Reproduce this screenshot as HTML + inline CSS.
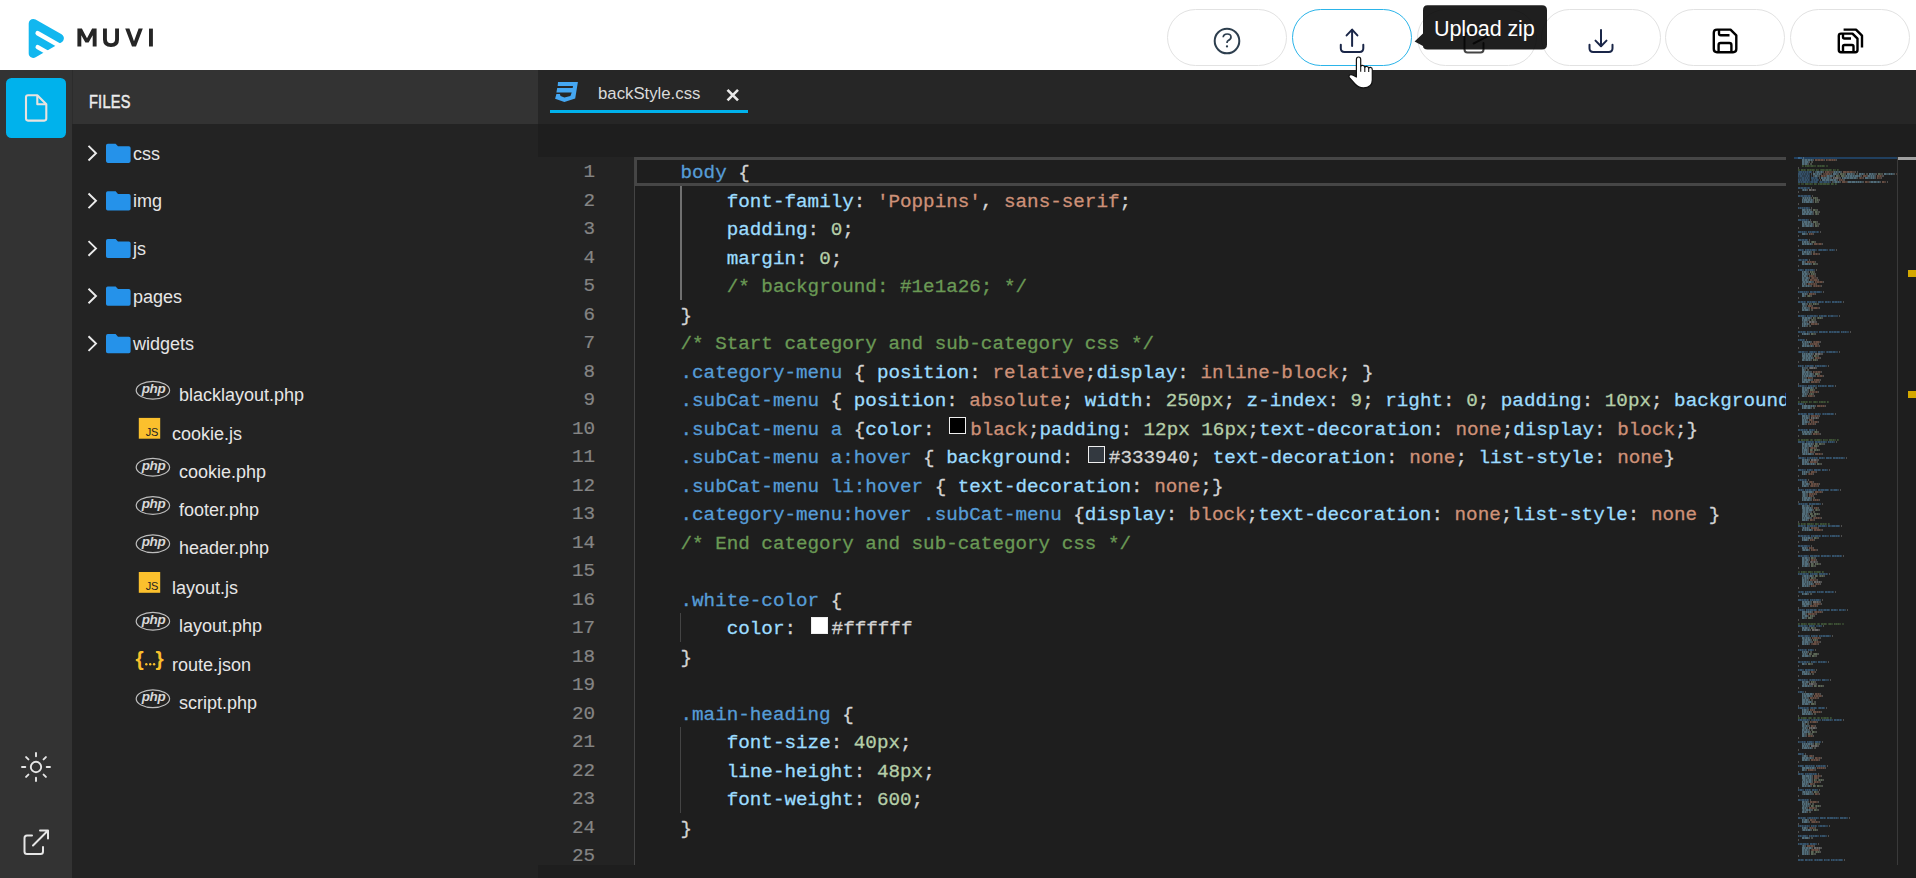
<!DOCTYPE html>
<html><head><meta charset="utf-8">
<style>
*{margin:0;padding:0;box-sizing:border-box}
html,body{width:1916px;height:878px;overflow:hidden;background:#1e1e1e;font-family:"Liberation Sans",sans-serif}
.abs{position:absolute}
#hdr{position:absolute;left:0;top:0;width:1916px;height:70px;background:#fff}
.btn{position:absolute;top:9px;width:120px;height:57px;border:1px solid #e2e2e2;border-radius:28.5px;background:#fff}
.btn.act{border:1.5px solid #2bb4e9}
#side{position:absolute;left:0;top:70px;width:72px;height:808px;background:#333333}
#files{position:absolute;left:72px;top:70px;width:466px;height:808px;background:#232323}
#fhdr{position:absolute;left:0;top:0;width:466px;height:54px;background:#333333;border-left:1px solid #2c2c2c}
.ftxt{position:absolute;color:#e6e6e6;font-size:18px;white-space:nowrap;line-height:22px}
#tabbar{position:absolute;left:538px;top:70px;width:1378px;height:54px;background:#262626}
#gap{position:absolute;left:538px;top:124px;width:1378px;height:33px;background:#1e1e1e}
#gutter{position:absolute;left:538px;top:157px;width:96px;height:708px;background:#232323}
#code{position:absolute;left:634px;top:157px;width:1152px;height:708px;background:#1e1e1e;overflow:hidden}
.ln{position:absolute;left:0;padding-top:1px;-webkit-text-stroke:0.2px currentColor;width:57px;text-align:right;color:#858585;font-family:"Liberation Mono",monospace;font-size:19.25px;line-height:28.5px;height:28.5px}
.cl{position:absolute;left:46.5px;padding-top:2px;-webkit-text-stroke:0.3px currentColor;white-space:pre;font-family:"Liberation Mono",monospace;font-size:19.25px;line-height:28.5px;height:28.5px;color:#d4d4d4}
.t{color:#569cd6}.p{color:#9cdcfe}.v{color:#ce9178}.n{color:#b5cea8}.c{color:#6a9955}.d{color:#d4d4d4}
.sw{display:inline-block;width:17px;height:17px;border:1.5px solid #fff;margin:0 4px 0 3px;vertical-align:0.5px;border-color:#eee}
.ig{position:absolute;width:1.5px;background:#707070}
</style></head><body>

<div id="hdr">
<svg class="abs" style="left:0;top:0" width="170" height="70" viewBox="0 0 170 70">
<path d="M33.3 23.6 L59.3 38.2 L33.3 53.4 Z" fill="#12b7ef" stroke="#12b7ef" stroke-width="9.2" stroke-linejoin="round"/>
<line x1="37.7" y1="33.2" x2="68" y2="50.5" stroke="#fff" stroke-width="4.6" stroke-linecap="round"/>
<line x1="37.7" y1="47.1" x2="58" y2="58.6" stroke="#fff" stroke-width="4.4" stroke-linecap="round"/>
</svg>
<svg class="abs" style="left:0;top:0" width="170" height="70" viewBox="0 0 170 70"><g fill="#262626">
<path d="M77.4 46.5 V28.6 H81.9 L87 38.3 L92.1 28.6 H96.6 V46.5 H92.7 V35.2 L88.6 42.6 H85.4 L81.3 35.2 V46.5 Z"/>
<path d="M103 28.6 H106.9 V39.3 Q106.9 43.2 111 43.2 Q115.1 43.2 115.1 39.3 V28.6 H119 V39.5 Q119 46.9 111 46.9 Q103 46.9 103 39.5 Z"/>
<path d="M125.2 28.6 H129.4 L134 41.3 L138.6 28.6 H142.8 L136 46.5 H132 Z"/>
<rect x="149" y="28.6" width="3.9" height="17.9"/>
</g></svg>
<div class="btn" style="left:1167px"></div>
<div class="btn act" style="left:1292px"></div>
<div class="btn" style="left:1417px"></div>
<div class="btn" style="left:1541px"></div>
<div class="btn" style="left:1665px"></div>
<div class="btn" style="left:1790px"></div>
</div>
<svg class="abs" style="left:0;top:0" width="1916" height="100" viewBox="0 0 1916 100">
<g fill="none" stroke="#2d3e4e">
<circle cx="1227" cy="41" r="12.3" stroke-width="2"/>
<path d="M1223.2 37.3 Q1223.4 34 1227.2 34 Q1231 34 1231 37 Q1231 39.4 1228.2 40.6 Q1227 41.2 1227 43" stroke-width="1.7"/>
</g>
<circle cx="1227" cy="46.4" r="1.15" fill="#2d3e4e"/>
<g fill="none" stroke="#1a2648" stroke-width="2" stroke-linecap="round" stroke-linejoin="round">
<path d="M1352.1 30 V46"/><path d="M1346.6 35.4 L1352.1 29.6 L1357.4 35.4"/>
<path d="M1340.8 44.8 V48.3 Q1340.8 52 1344.5 52 H1359.6 Q1363.3 52 1363.3 48.3 V44.8"/>
</g>
<g fill="none" stroke="#1a2648" stroke-width="2" stroke-linecap="round" stroke-linejoin="round">
<path d="M1601 30 V46"/><path d="M1595.5 40.6 L1601 46.2 L1606.5 40.6"/>
<path d="M1589.5 44.8 V48.3 Q1589.5 52 1593.2 52 H1608.8 Q1612.5 52 1612.5 48.3 V44.8"/>
</g>
<g fill="none" stroke="#444" stroke-width="2" stroke-linecap="round">
<path d="M1474 33 H1467.5 Q1464.5 33 1464.5 36 V49.5 Q1464.5 52.5 1467.5 52.5 H1480.5 Q1483.5 52.5 1483.5 49.5 V43"/>
<path d="M1473.6 43.5 L1487 36.7"/>
</g>
<g fill="none" stroke="#000" stroke-width="2.4" stroke-linejoin="round">
<path d="M1717 29.6 H1730.5 L1736.3 35.4 V49 Q1736.3 52.2 1733.1 52.2 H1717 Q1713.8 52.2 1713.8 49 V32.8 Q1713.8 29.6 1717 29.6 Z"/>
<path d="M1719 30 V33.5 Q1719 35.3 1720.8 35.3 H1729.5"/>
<path d="M1718.6 52 V45 Q1718.6 43 1720.6 43 H1729.4 Q1731.4 43 1731.4 45 V52"/>
</g>
<g fill="none" stroke="#000" stroke-width="2.4" stroke-linejoin="round">
<path d="M1841 33.6 H1852.5 L1857.5 38.6 V50 Q1857.5 52.2 1855.3 52.2 H1841 Q1838.8 52.2 1838.8 50 V35.8 Q1838.8 33.6 1841 33.6 Z"/>
<path d="M1843 34 V37 Q1843 38.5 1844.5 38.5 H1851"/>
<path d="M1843 52 V46.5 Q1843 45 1844.5 45 H1852 Q1853.5 45 1853.5 46.5 V52"/>
<path d="M1843.6 29.6 H1856 L1862 35.6 V47.5"/>
</g>
</svg>
<svg class="abs" style="left:1410px;top:0" width="140" height="56" viewBox="1410 0 140 56">
<path d="M1427.5 5.2 H1542 Q1547 5.2 1547 10.2 V44.4 Q1547 49.4 1542 49.4 H1427.5 Q1423 49.4 1423 46 L1414.6 41.5 L1423 33.5 V10.2 Q1423 5.2 1427.5 5.2 Z" fill="#000" fill-opacity="0.88"/>
</svg>
<div class="abs" style="left:1434px;top:16.5px;font-size:21.6px;letter-spacing:-0.15px;color:#fff;line-height:24px;white-space:nowrap">Upload zip</div>
<div id="side">
<div class="abs" style="left:6px;top:8px;width:60px;height:60px;border-radius:5.5px;background:#00b2ec"></div>
<svg class="abs" style="left:0;top:0" width="72" height="808" viewBox="0 70 72 808">
<g fill="none" stroke="#e9e3df" stroke-width="2.1" stroke-linejoin="round">
<path d="M37.3 95.3 H28 Q26 95.3 26 97.3 V118.6 Q26 120.6 28 120.6 H44.3 Q46.3 120.6 46.3 118.6 V104.3 Z"/>
<path d="M37.3 95.3 V104.3 H46.3"/>
</g>
<g fill="none" stroke="#e6e6e6" stroke-width="1.9" stroke-linecap="round">
<circle cx="36" cy="767" r="5.2"/>
<path d="M36 753 V756.3 M36 777.7 V781 M22 767 H25.3 M46.7 767 H50 M26.1 757.1 L28.4 759.4 M43.6 774.6 L45.9 776.9 M26.1 776.9 L28.4 774.6 M43.6 759.4 L45.9 757.1"/>
</g>
<g fill="none" stroke="#e6e6e6" stroke-width="2" stroke-linecap="round" stroke-linejoin="round">
<path d="M32 835.5 H27 Q24.5 835.5 24.5 838 V851.5 Q24.5 854 27 854 H40.5 Q43 854 43 851.5 V847"/>
<path d="M33 845.5 L47.5 831 M40 830.5 H48 V838.5"/>
</g>
</svg>
</div>
<div id="files"><div id="fhdr"></div>
<div class="abs" style="left:16.5px;top:21px;font-size:17.5px;-webkit-text-stroke:0.5px #ececec;color:#ececec;line-height:22px;letter-spacing:0.3px;transform:scaleX(0.83);transform-origin:0 0">FILES</div>
<svg class="abs" style="left:0;top:0" width="466" height="808" viewBox="72 70 466 808"><path d="M88.5 145.89999999999998 L96 153.2 L88.5 160.5" fill="none" stroke="#ececec" stroke-width="1.9"/><path d="M107.8 143.7 H115.6 L118 146.29999999999998 H128.8 Q130.6 146.29999999999998 130.6 148.1 V161.1 Q130.6 162.89999999999998 128.8 162.89999999999998 H107.8 Q106 162.89999999999998 106 161.1 V145.5 Q106 143.7 107.8 143.7 Z" fill="#2592ea"/><path d="M88.5 193.49999999999997 L96 200.79999999999998 L88.5 208.1" fill="none" stroke="#ececec" stroke-width="1.9"/><path d="M107.8 191.29999999999998 H115.6 L118 193.89999999999998 H128.8 Q130.6 193.89999999999998 130.6 195.7 V208.7 Q130.6 210.49999999999997 128.8 210.49999999999997 H107.8 Q106 210.49999999999997 106 208.7 V193.1 Q106 191.29999999999998 107.8 191.29999999999998 Z" fill="#2592ea"/><path d="M88.5 241.09999999999997 L96 248.39999999999998 L88.5 255.7" fill="none" stroke="#ececec" stroke-width="1.9"/><path d="M107.8 238.89999999999998 H115.6 L118 241.49999999999997 H128.8 Q130.6 241.49999999999997 130.6 243.29999999999998 V256.29999999999995 Q130.6 258.09999999999997 128.8 258.09999999999997 H107.8 Q106 258.09999999999997 106 256.29999999999995 V240.7 Q106 238.89999999999998 107.8 238.89999999999998 Z" fill="#2592ea"/><path d="M88.5 288.7 L96 296.0 L88.5 303.3" fill="none" stroke="#ececec" stroke-width="1.9"/><path d="M107.8 286.5 H115.6 L118 289.1 H128.8 Q130.6 289.1 130.6 290.9 V303.9 Q130.6 305.7 128.8 305.7 H107.8 Q106 305.7 106 303.9 V288.3 Q106 286.5 107.8 286.5 Z" fill="#2592ea"/><path d="M88.5 336.3 L96 343.6 L88.5 350.90000000000003" fill="none" stroke="#ececec" stroke-width="1.9"/><path d="M107.8 334.1 H115.6 L118 336.70000000000005 H128.8 Q130.6 336.70000000000005 130.6 338.5 V351.5 Q130.6 353.3 128.8 353.3 H107.8 Q106 353.3 106 351.5 V335.90000000000003 Q106 334.1 107.8 334.1 Z" fill="#2592ea"/><ellipse cx="152.9" cy="390.2" rx="16.7" ry="8.9" fill="none" stroke="#bdbdbd" stroke-width="1.2"/><text x="153.6" y="392.59999999999997" text-anchor="middle" font-family="Liberation Sans" font-weight="bold" font-style="italic" font-size="13.5" letter-spacing="-0.3" fill="#d8d8d8">php</text><rect x="138.8" y="417.9" width="21.4" height="20.8" fill="#fbc02d"/><text x="158" y="436.09999999999997" text-anchor="end" font-family="Liberation Sans" font-size="11" letter-spacing="-0.3" fill="#222">JS</text><ellipse cx="152.9" cy="467.3" rx="16.7" ry="8.9" fill="none" stroke="#bdbdbd" stroke-width="1.2"/><text x="153.6" y="469.7" text-anchor="middle" font-family="Liberation Sans" font-weight="bold" font-style="italic" font-size="13.5" letter-spacing="-0.3" fill="#d8d8d8">php</text><ellipse cx="152.9" cy="505.5" rx="16.7" ry="8.9" fill="none" stroke="#bdbdbd" stroke-width="1.2"/><text x="153.6" y="507.9" text-anchor="middle" font-family="Liberation Sans" font-weight="bold" font-style="italic" font-size="13.5" letter-spacing="-0.3" fill="#d8d8d8">php</text><ellipse cx="152.9" cy="543.8" rx="16.7" ry="8.9" fill="none" stroke="#bdbdbd" stroke-width="1.2"/><text x="153.6" y="546.1999999999999" text-anchor="middle" font-family="Liberation Sans" font-weight="bold" font-style="italic" font-size="13.5" letter-spacing="-0.3" fill="#d8d8d8">php</text><rect x="138.8" y="572.0" width="21.4" height="20.8" fill="#fbc02d"/><text x="158" y="590.2" text-anchor="end" font-family="Liberation Sans" font-size="11" letter-spacing="-0.3" fill="#222">JS</text><ellipse cx="152.9" cy="621.3" rx="16.7" ry="8.9" fill="none" stroke="#bdbdbd" stroke-width="1.2"/><text x="153.6" y="623.6999999999999" text-anchor="middle" font-family="Liberation Sans" font-weight="bold" font-style="italic" font-size="13.5" letter-spacing="-0.3" fill="#d8d8d8">php</text><text x="135.5" y="666.0" font-family="Liberation Sans" font-weight="bold" font-size="21" fill="#f9bf2c">{</text><text x="155.5" y="666.0" font-family="Liberation Sans" font-weight="bold" font-size="21" fill="#f9bf2c">}</text><circle cx="146.3" cy="664.3" r="1.2" fill="#f9bf2c"/><circle cx="150.2" cy="664.3" r="1.2" fill="#f9bf2c"/><circle cx="154.1" cy="664.3" r="1.2" fill="#f9bf2c"/><ellipse cx="152.9" cy="698.8" rx="16.7" ry="8.9" fill="none" stroke="#bdbdbd" stroke-width="1.2"/><text x="153.6" y="701.1999999999999" text-anchor="middle" font-family="Liberation Sans" font-weight="bold" font-style="italic" font-size="13.5" letter-spacing="-0.3" fill="#d8d8d8">php</text></svg>
<div class="ftxt" style="left:61px;top:72.80000000000001px">css</div>
<div class="ftxt" style="left:61px;top:120.4px">img</div>
<div class="ftxt" style="left:61px;top:168.0px">js</div>
<div class="ftxt" style="left:61px;top:215.60000000000002px">pages</div>
<div class="ftxt" style="left:61px;top:263.20000000000005px">widgets</div>
<div class="ftxt" style="left:107px;top:313.8px">blacklayout.php</div>
<div class="ftxt" style="left:100px;top:352.5px">cookie.js</div>
<div class="ftxt" style="left:107px;top:390.90000000000003px">cookie.php</div>
<div class="ftxt" style="left:107px;top:429.1px">footer.php</div>
<div class="ftxt" style="left:107px;top:467.4px">header.php</div>
<div class="ftxt" style="left:100px;top:506.6px">layout.js</div>
<div class="ftxt" style="left:107px;top:544.9px">layout.php</div>
<div class="ftxt" style="left:100px;top:583.6px">route.json</div>
<div class="ftxt" style="left:107px;top:622.4px">script.php</div>
</div>
<div id="tabbar">
<svg class="abs" style="left:0;top:0" width="60" height="54" viewBox="538 70 60 54">
<path d="M558 82 L577.9 82 L575.2 98.4 L564.4 101.9 L555.1 98.7 L556.4 94 L559.9 94 L560.5 95.9 L564.4 97.5 L570.4 95.9 L571.7 92.4 L556.4 92.4 L557.2 87.9 L572.7 87.9 L573 86.1 L557.7 86.1 Z" fill="#45a7f2"/>
</svg>
<div class="abs" style="left:60px;top:13px;font-size:16.75px;color:#dadada;line-height:22px;white-space:nowrap">backStyle.css</div>
<svg class="abs" style="left:180px;top:10px" width="30" height="30" viewBox="718 80 30 30">
<path d="M727.5 89.8 L738 100.3 M738 89.8 L727.5 100.3" stroke="#e8e8e8" stroke-width="2.6"/>
</svg>
<div class="abs" style="left:12px;top:39.8px;width:198px;height:3.2px;background:#00b2ec"></div>
</div>
<div id="gap"></div>
<div id="gutter">
<div class="ln" style="top:0.0px">1</div>
<div class="ln" style="top:28.5px">2</div>
<div class="ln" style="top:57.0px">3</div>
<div class="ln" style="top:85.5px">4</div>
<div class="ln" style="top:114.0px">5</div>
<div class="ln" style="top:142.5px">6</div>
<div class="ln" style="top:171.0px">7</div>
<div class="ln" style="top:199.5px">8</div>
<div class="ln" style="top:228.0px">9</div>
<div class="ln" style="top:256.5px">10</div>
<div class="ln" style="top:285.0px">11</div>
<div class="ln" style="top:313.5px">12</div>
<div class="ln" style="top:342.0px">13</div>
<div class="ln" style="top:370.5px">14</div>
<div class="ln" style="top:399.0px">15</div>
<div class="ln" style="top:427.5px">16</div>
<div class="ln" style="top:456.0px">17</div>
<div class="ln" style="top:484.5px">18</div>
<div class="ln" style="top:513.0px">19</div>
<div class="ln" style="top:541.5px">20</div>
<div class="ln" style="top:570.0px">21</div>
<div class="ln" style="top:598.5px">22</div>
<div class="ln" style="top:627.0px">23</div>
<div class="ln" style="top:655.5px">24</div>
<div class="ln" style="top:684.0px">25</div>
</div>
<div id="code">
<div class="abs" style="left:0;top:0;width:1152px;height:29px;border:3px solid #464646;border-right:none"></div>
<div class="ig" style="left:46px;top:28.5px;height:114.0px"></div>
<div class="ig" style="left:46px;width:1.2px;background:#444;top:456.0px;height:28.5px"></div>
<div class="ig" style="left:46px;width:1.2px;background:#444;top:570.0px;height:85.5px"></div>
<div class="cl" style="top:0.0px"><span class="t">body</span><span class="d"> {</span></div>
<div class="cl" style="top:28.5px">    <span class="p">font-family</span><span class="d">: </span><span class="v">'Poppins'</span><span class="d">, </span><span class="v">sans-serif</span><span class="d">;</span></div>
<div class="cl" style="top:57.0px">    <span class="p">padding</span><span class="d">: </span><span class="n">0</span><span class="d">;</span></div>
<div class="cl" style="top:85.5px">    <span class="p">margin</span><span class="d">: </span><span class="n">0</span><span class="d">;</span></div>
<div class="cl" style="top:114.0px">    <span class="c">/* background: #1e1a26; */</span></div>
<div class="cl" style="top:142.5px"><span class="d">}</span></div>
<div class="cl" style="top:171.0px"><span class="c">/* Start category and sub-category css */</span></div>
<div class="cl" style="top:199.5px"><span class="t">.category-menu</span><span class="d"> { </span><span class="p">position</span><span class="d">: </span><span class="v">relative</span><span class="d">;</span><span class="p">display</span><span class="d">: </span><span class="v">inline-block</span><span class="d">; }</span></div>
<div class="cl" style="top:228.0px"><span class="t">.subCat-menu</span><span class="d"> { </span><span class="p">position</span><span class="d">: </span><span class="v">absolute</span><span class="d">; </span><span class="p">width</span><span class="d">: </span><span class="n">250px</span><span class="d">; </span><span class="p">z-index</span><span class="d">: </span><span class="n">9</span><span class="d">; </span><span class="p">right</span><span class="d">: </span><span class="n">0</span><span class="d">; </span><span class="p">padding</span><span class="d">: </span><span class="n">10px</span><span class="d">; </span><span class="p">background</span><span class="d">: </span><span class="v">#fff</span></div>
<div class="cl" style="top:256.5px"><span class="t">.subCat-menu a</span><span class="d"> {</span><span class="p">color</span><span class="d">: </span><span class="sw" style="background:#000"></span><span class="v">black</span><span class="d">;</span><span class="p">padding</span><span class="d">: </span><span class="n">12px 16px</span><span class="d">;</span><span class="p">text-decoration</span><span class="d">: </span><span class="v">none</span><span class="d">;</span><span class="p">display</span><span class="d">: </span><span class="v">block</span><span class="d">;}</span></div>
<div class="cl" style="top:285.0px"><span class="t">.subCat-menu a:hover</span><span class="d"> { </span><span class="p">background</span><span class="d">: </span><span class="sw" style="background:#333940"></span><span class="d">#333940; </span><span class="p">text-decoration</span><span class="d">: </span><span class="v">none</span><span class="d">; </span><span class="p">list-style</span><span class="d">: </span><span class="v">none</span><span class="d">}</span></div>
<div class="cl" style="top:313.5px"><span class="t">.subCat-menu li:hover</span><span class="d"> { </span><span class="p">text-decoration</span><span class="d">: </span><span class="v">none</span><span class="d">;}</span></div>
<div class="cl" style="top:342.0px"><span class="t">.category-menu:hover .subCat-menu</span><span class="d"> {</span><span class="p">display</span><span class="d">: </span><span class="v">block</span><span class="d">;</span><span class="p">text-decoration</span><span class="d">: </span><span class="v">none</span><span class="d">;</span><span class="p">list-style</span><span class="d">: </span><span class="v">none</span><span class="d"> }</span></div>
<div class="cl" style="top:370.5px"><span class="c">/* End category and sub-category css */</span></div>
<div class="cl" style="top:399.0px"></div>
<div class="cl" style="top:427.5px"><span class="t">.white-color</span><span class="d"> {</span></div>
<div class="cl" style="top:456.0px">    <span class="p">color</span><span class="d">: </span><span class="sw" style="background:#ffffff"></span><span class="d">#ffffff</span></div>
<div class="cl" style="top:484.5px"><span class="d">}</span></div>
<div class="cl" style="top:513.0px"></div>
<div class="cl" style="top:541.5px"><span class="t">.main-heading</span><span class="d"> {</span></div>
<div class="cl" style="top:570.0px">    <span class="p">font-size</span><span class="d">: </span><span class="n">40px</span><span class="d">;</span></div>
<div class="cl" style="top:598.5px">    <span class="p">line-height</span><span class="d">: </span><span class="n">48px</span><span class="d">;</span></div>
<div class="cl" style="top:627.0px">    <span class="p">font-weight</span><span class="d">: </span><span class="n">600</span><span class="d">;</span></div>
<div class="cl" style="top:655.5px"><span class="d">}</span></div>
<div class="cl" style="top:684.0px"></div>
</div>
<div class="abs" style="left:634px;top:157px;width:1.2px;height:708px;background:#444"></div>
<div class="abs" style="left:1786px;top:157px;width:130px;height:708px;background:#1e1e1e"></div>
<div class="abs" style="left:1897px;top:157px;width:1px;height:708px;background:#3a3a3a"></div>
<div class="abs" style="left:1793.5px;top:157px;width:103.5px;height:2px;background:#21405f"></div>
<div class="abs" style="left:1898px;top:157px;width:18px;height:3px;background:#a0a0a0"></div>
<div class="abs" style="left:1908px;top:269.5px;width:8px;height:7px;background:#d4a800"></div>
<div class="abs" style="left:1908px;top:391px;width:8px;height:7px;background:#d4a800"></div>
<svg class="abs" style="left:1790px;top:157px" width="107" height="708" viewBox="1790 157 107 708"><path fill="#569cd6" opacity="0.55" d="M1798 157.3h2.65v1.4h-2.65zM1801 157.3h0.65v1.4h-0.65zM1798 171.3h0.65v1.4h-0.65zM1799 171.3h3.65v1.4h-3.65zM1803 171.3h1.65v1.4h-1.65zM1805 171.3h1.65v1.4h-1.65zM1807 171.3h1.65v1.4h-1.65zM1809 171.3h2.65v1.4h-2.65zM1798 173.3h3.65v1.4h-3.65zM1802 173.3h1.65v1.4h-1.65zM1804 173.3h1.65v1.4h-1.65zM1806 173.3h0.65v1.4h-0.65zM1807 173.3h1.65v1.4h-1.65zM1809 173.3h0.65v1.4h-0.65zM1798 175.3h1.65v1.4h-1.65zM1800 175.3h2.65v1.4h-2.65zM1803 175.3h0.65v1.4h-0.65zM1804 175.3h0.65v1.4h-0.65zM1805 175.3h0.65v1.4h-0.65zM1806 175.3h1.65v1.4h-1.65zM1808 175.3h1.65v1.4h-1.65zM1811 175.3h0.65v1.4h-0.65zM1798 177.3h0.65v1.4h-0.65zM1799 177.3h0.65v1.4h-0.65zM1800 177.3h0.65v1.4h-0.65zM1801 177.3h0.65v1.4h-0.65zM1802 177.3h2.65v1.4h-2.65zM1805 177.3h1.65v1.4h-1.65zM1807 177.3h1.65v1.4h-1.65zM1809 177.3h0.65v1.4h-0.65zM1811 177.3h3.65v1.4h-3.65zM1815 177.3h2.65v1.4h-2.65zM1798 179.3h1.65v1.4h-1.65zM1800 179.3h1.65v1.4h-1.65zM1802 179.3h2.65v1.4h-2.65zM1805 179.3h2.65v1.4h-2.65zM1808 179.3h1.65v1.4h-1.65zM1811 179.3h0.65v1.4h-0.65zM1812 179.3h1.65v1.4h-1.65zM1814 179.3h1.65v1.4h-1.65zM1816 179.3h2.65v1.4h-2.65zM1798 181.3h2.65v1.4h-2.65zM1801 181.3h1.65v1.4h-1.65zM1803 181.3h3.65v1.4h-3.65zM1807 181.3h1.65v1.4h-1.65zM1809 181.3h0.65v1.4h-0.65zM1810 181.3h0.65v1.4h-0.65zM1811 181.3h2.65v1.4h-2.65zM1814 181.3h3.65v1.4h-3.65zM1819 181.3h0.65v1.4h-0.65zM1820 181.3h2.65v1.4h-2.65zM1823 181.3h0.65v1.4h-0.65zM1824 181.3h3.65v1.4h-3.65zM1828 181.3h1.65v1.4h-1.65zM1830 181.3h0.65v1.4h-0.65zM1798 187.3h2.65v1.4h-2.65zM1801 187.3h2.65v1.4h-2.65zM1804 187.3h2.65v1.4h-2.65zM1807 187.3h0.65v1.4h-0.65zM1808 187.3h1.65v1.4h-1.65zM1798 195.3h2.65v1.4h-2.65zM1801 195.3h2.65v1.4h-2.65zM1804 195.3h3.65v1.4h-3.65zM1808 195.3h2.65v1.4h-2.65zM1798 207.3h1.65v1.4h-1.65zM1800 207.3h1.65v1.4h-1.65zM1802 207.3h1.65v1.4h-1.65zM1804 207.3h1.65v1.4h-1.65zM1806 207.3h2.65v1.4h-2.65zM1809 207.3h0.65v1.4h-0.65zM1798 219.3h3.65v1.4h-3.65zM1802 219.3h3.65v1.4h-3.65zM1806 219.3h1.65v1.4h-1.65zM1808 219.3h0.65v1.4h-0.65zM1798 231.3h3.65v1.4h-3.65zM1802 231.3h1.65v1.4h-1.65zM1804 231.3h1.65v1.4h-1.65zM1806 231.3h0.65v1.4h-0.65zM1808 231.3h1.65v1.4h-1.65zM1810 231.3h1.65v1.4h-1.65zM1812 231.3h3.65v1.4h-3.65zM1816 231.3h0.65v1.4h-0.65zM1817 231.3h1.65v1.4h-1.65zM1798 239.3h3.65v1.4h-3.65zM1802 239.3h2.65v1.4h-2.65zM1805 239.3h2.65v1.4h-2.65zM1798 249.3h3.65v1.4h-3.65zM1802 249.3h1.65v1.4h-1.65zM1805 249.3h1.65v1.4h-1.65zM1807 249.3h2.65v1.4h-2.65zM1810 249.3h1.65v1.4h-1.65zM1812 249.3h3.65v1.4h-3.65zM1816 249.3h0.65v1.4h-0.65zM1818 249.3h0.65v1.4h-0.65zM1819 249.3h3.65v1.4h-3.65zM1823 249.3h3.65v1.4h-3.65zM1827 249.3h0.65v1.4h-0.65zM1829 249.3h0.65v1.4h-0.65zM1830 249.3h1.65v1.4h-1.65zM1832 249.3h1.65v1.4h-1.65zM1834 249.3h0.65v1.4h-0.65zM1798 259.3h0.65v1.4h-0.65zM1799 259.3h2.65v1.4h-2.65zM1802 259.3h0.65v1.4h-0.65zM1803 259.3h1.65v1.4h-1.65zM1805 259.3h2.65v1.4h-2.65zM1798 269.3h1.65v1.4h-1.65zM1800 269.3h2.65v1.4h-2.65zM1803 269.3h0.65v1.4h-0.65zM1805 269.3h2.65v1.4h-2.65zM1808 269.3h1.65v1.4h-1.65zM1810 269.3h3.65v1.4h-3.65zM1814 269.3h0.65v1.4h-0.65zM1798 291.3h1.65v1.4h-1.65zM1800 291.3h3.65v1.4h-3.65zM1804 291.3h1.65v1.4h-1.65zM1806 291.3h1.65v1.4h-1.65zM1808 291.3h0.65v1.4h-0.65zM1810 291.3h2.65v1.4h-2.65zM1813 291.3h0.65v1.4h-0.65zM1814 291.3h2.65v1.4h-2.65zM1817 291.3h3.65v1.4h-3.65zM1821 291.3h0.65v1.4h-0.65zM1798 301.3h2.65v1.4h-2.65zM1801 301.3h2.65v1.4h-2.65zM1804 301.3h1.65v1.4h-1.65zM1807 301.3h2.65v1.4h-2.65zM1810 301.3h1.65v1.4h-1.65zM1812 301.3h3.65v1.4h-3.65zM1816 301.3h0.65v1.4h-0.65zM1818 301.3h3.65v1.4h-3.65zM1822 301.3h1.65v1.4h-1.65zM1825 301.3h2.65v1.4h-2.65zM1828 301.3h1.65v1.4h-1.65zM1830 301.3h0.65v1.4h-0.65zM1832 301.3h2.65v1.4h-2.65zM1835 301.3h2.65v1.4h-2.65zM1838 301.3h1.65v1.4h-1.65zM1840 301.3h1.65v1.4h-1.65zM1798 315.3h2.65v1.4h-2.65zM1801 315.3h3.65v1.4h-3.65zM1805 315.3h0.65v1.4h-0.65zM1807 315.3h1.65v1.4h-1.65zM1809 315.3h0.65v1.4h-0.65zM1810 315.3h3.65v1.4h-3.65zM1814 315.3h2.65v1.4h-2.65zM1817 315.3h0.65v1.4h-0.65zM1819 315.3h1.65v1.4h-1.65zM1821 315.3h2.65v1.4h-2.65zM1824 315.3h2.65v1.4h-2.65zM1828 315.3h1.65v1.4h-1.65zM1830 315.3h0.65v1.4h-0.65zM1831 315.3h2.65v1.4h-2.65zM1834 315.3h0.65v1.4h-0.65zM1835 315.3h0.65v1.4h-0.65zM1836 315.3h0.65v1.4h-0.65zM1837 315.3h0.65v1.4h-0.65zM1798 331.3h2.65v1.4h-2.65zM1801 331.3h1.65v1.4h-1.65zM1803 331.3h2.65v1.4h-2.65zM1807 331.3h1.65v1.4h-1.65zM1809 331.3h0.65v1.4h-0.65zM1810 331.3h2.65v1.4h-2.65zM1813 331.3h0.65v1.4h-0.65zM1814 331.3h1.65v1.4h-1.65zM1816 331.3h0.65v1.4h-0.65zM1817 331.3h0.65v1.4h-0.65zM1819 331.3h3.65v1.4h-3.65zM1823 331.3h2.65v1.4h-2.65zM1826 331.3h1.65v1.4h-1.65zM1829 331.3h2.65v1.4h-2.65zM1832 331.3h1.65v1.4h-1.65zM1834 331.3h2.65v1.4h-2.65zM1837 331.3h2.65v1.4h-2.65zM1841 331.3h1.65v1.4h-1.65zM1843 331.3h1.65v1.4h-1.65zM1845 331.3h1.65v1.4h-1.65zM1847 331.3h0.65v1.4h-0.65zM1848 331.3h0.65v1.4h-0.65zM1798 339.3h1.65v1.4h-1.65zM1800 339.3h2.65v1.4h-2.65zM1803 339.3h1.65v1.4h-1.65zM1798 351.3h0.65v1.4h-0.65zM1799 351.3h2.65v1.4h-2.65zM1802 351.3h2.65v1.4h-2.65zM1805 351.3h0.65v1.4h-0.65zM1806 351.3h0.65v1.4h-0.65zM1807 351.3h0.65v1.4h-0.65zM1809 351.3h0.65v1.4h-0.65zM1810 351.3h3.65v1.4h-3.65zM1814 351.3h1.65v1.4h-1.65zM1816 351.3h0.65v1.4h-0.65zM1818 351.3h2.65v1.4h-2.65zM1821 351.3h2.65v1.4h-2.65zM1824 351.3h0.65v1.4h-0.65zM1826 351.3h0.65v1.4h-0.65zM1827 351.3h1.65v1.4h-1.65zM1829 351.3h3.65v1.4h-3.65zM1833 351.3h2.65v1.4h-2.65zM1836 351.3h0.65v1.4h-0.65zM1837 351.3h0.65v1.4h-0.65zM1798 365.3h1.65v1.4h-1.65zM1800 365.3h1.65v1.4h-1.65zM1802 365.3h1.65v1.4h-1.65zM1805 365.3h1.65v1.4h-1.65zM1807 365.3h2.65v1.4h-2.65zM1810 365.3h3.65v1.4h-3.65zM1815 365.3h1.65v1.4h-1.65zM1817 365.3h2.65v1.4h-2.65zM1820 365.3h1.65v1.4h-1.65zM1822 365.3h3.65v1.4h-3.65zM1826 365.3h0.65v1.4h-0.65zM1798 385.3h1.65v1.4h-1.65zM1800 385.3h1.65v1.4h-1.65zM1802 385.3h2.65v1.4h-2.65zM1805 385.3h0.65v1.4h-0.65zM1806 385.3h0.65v1.4h-0.65zM1808 385.3h1.65v1.4h-1.65zM1810 385.3h2.65v1.4h-2.65zM1813 385.3h2.65v1.4h-2.65zM1816 385.3h0.65v1.4h-0.65zM1818 385.3h1.65v1.4h-1.65zM1820 385.3h1.65v1.4h-1.65zM1822 385.3h2.65v1.4h-2.65zM1825 385.3h1.65v1.4h-1.65zM1828 385.3h3.65v1.4h-3.65zM1832 385.3h1.65v1.4h-1.65zM1798 403.3h1.65v1.4h-1.65zM1800 403.3h2.65v1.4h-2.65zM1803 403.3h0.65v1.4h-0.65zM1798 413.3h2.65v1.4h-2.65zM1801 413.3h2.65v1.4h-2.65zM1804 413.3h2.65v1.4h-2.65zM1808 413.3h2.65v1.4h-2.65zM1811 413.3h2.65v1.4h-2.65zM1815 413.3h2.65v1.4h-2.65zM1818 413.3h1.65v1.4h-1.65zM1820 413.3h0.65v1.4h-0.65zM1822 413.3h0.65v1.4h-0.65zM1823 413.3h1.65v1.4h-1.65zM1825 413.3h1.65v1.4h-1.65zM1827 413.3h3.65v1.4h-3.65zM1831 413.3h2.65v1.4h-2.65zM1798 429.3h2.65v1.4h-2.65zM1801 429.3h2.65v1.4h-2.65zM1804 429.3h1.65v1.4h-1.65zM1806 429.3h1.65v1.4h-1.65zM1809 429.3h2.65v1.4h-2.65zM1812 429.3h1.65v1.4h-1.65zM1814 429.3h0.65v1.4h-0.65zM1798 441.3h3.65v1.4h-3.65zM1802 441.3h2.65v1.4h-2.65zM1806 441.3h1.65v1.4h-1.65zM1808 441.3h3.65v1.4h-3.65zM1812 441.3h1.65v1.4h-1.65zM1815 441.3h2.65v1.4h-2.65zM1818 441.3h2.65v1.4h-2.65zM1821 441.3h1.65v1.4h-1.65zM1823 441.3h2.65v1.4h-2.65zM1826 441.3h0.65v1.4h-0.65zM1828 441.3h1.65v1.4h-1.65zM1830 441.3h1.65v1.4h-1.65zM1832 441.3h1.65v1.4h-1.65zM1834 441.3h0.65v1.4h-0.65zM1798 457.3h0.65v1.4h-0.65zM1799 457.3h2.65v1.4h-2.65zM1802 457.3h2.65v1.4h-2.65zM1805 457.3h0.65v1.4h-0.65zM1807 457.3h1.65v1.4h-1.65zM1809 457.3h0.65v1.4h-0.65zM1810 457.3h1.65v1.4h-1.65zM1812 457.3h1.65v1.4h-1.65zM1814 457.3h1.65v1.4h-1.65zM1816 457.3h1.65v1.4h-1.65zM1819 457.3h2.65v1.4h-2.65zM1822 457.3h1.65v1.4h-1.65zM1824 457.3h0.65v1.4h-0.65zM1826 457.3h3.65v1.4h-3.65zM1830 457.3h1.65v1.4h-1.65zM1833 457.3h2.65v1.4h-2.65zM1836 457.3h2.65v1.4h-2.65zM1839 457.3h1.65v1.4h-1.65zM1841 457.3h2.65v1.4h-2.65zM1844 457.3h0.65v1.4h-0.65zM1798 469.3h3.65v1.4h-3.65zM1802 469.3h1.65v1.4h-1.65zM1804 469.3h0.65v1.4h-0.65zM1805 469.3h0.65v1.4h-0.65zM1807 469.3h1.65v1.4h-1.65zM1809 469.3h2.65v1.4h-2.65zM1812 469.3h0.65v1.4h-0.65zM1814 469.3h3.65v1.4h-3.65zM1818 469.3h2.65v1.4h-2.65zM1822 469.3h2.65v1.4h-2.65zM1825 469.3h1.65v1.4h-1.65zM1827 469.3h0.65v1.4h-0.65zM1798 479.3h1.65v1.4h-1.65zM1800 479.3h1.65v1.4h-1.65zM1802 479.3h1.65v1.4h-1.65zM1804 479.3h0.65v1.4h-0.65zM1805 479.3h1.65v1.4h-1.65zM1798 489.3h2.65v1.4h-2.65zM1801 489.3h1.65v1.4h-1.65zM1803 489.3h0.65v1.4h-0.65zM1805 489.3h1.65v1.4h-1.65zM1807 489.3h1.65v1.4h-1.65zM1809 489.3h2.65v1.4h-2.65zM1812 489.3h0.65v1.4h-0.65zM1813 489.3h2.65v1.4h-2.65zM1816 489.3h0.65v1.4h-0.65zM1818 489.3h2.65v1.4h-2.65zM1821 489.3h3.65v1.4h-3.65zM1825 489.3h3.65v1.4h-3.65zM1830 489.3h0.65v1.4h-0.65zM1831 489.3h1.65v1.4h-1.65zM1833 489.3h0.65v1.4h-0.65zM1834 489.3h3.65v1.4h-3.65zM1838 489.3h0.65v1.4h-0.65zM1798 503.3h0.65v1.4h-0.65zM1799 503.3h1.65v1.4h-1.65zM1801 503.3h1.65v1.4h-1.65zM1803 503.3h1.65v1.4h-1.65zM1805 503.3h2.65v1.4h-2.65zM1809 503.3h2.65v1.4h-2.65zM1812 503.3h3.65v1.4h-3.65zM1816 503.3h3.65v1.4h-3.65zM1820 503.3h0.65v1.4h-0.65zM1798 525.3h2.65v1.4h-2.65zM1801 525.3h2.65v1.4h-2.65zM1804 525.3h1.65v1.4h-1.65zM1807 525.3h2.65v1.4h-2.65zM1810 525.3h3.65v1.4h-3.65zM1814 525.3h1.65v1.4h-1.65zM1816 525.3h0.65v1.4h-0.65zM1818 525.3h3.65v1.4h-3.65zM1822 525.3h3.65v1.4h-3.65zM1826 525.3h0.65v1.4h-0.65zM1828 525.3h2.65v1.4h-2.65zM1831 525.3h0.65v1.4h-0.65zM1832 525.3h3.65v1.4h-3.65zM1836 525.3h3.65v1.4h-3.65zM1798 535.3h2.65v1.4h-2.65zM1801 535.3h2.65v1.4h-2.65zM1804 535.3h2.65v1.4h-2.65zM1807 535.3h0.65v1.4h-0.65zM1808 535.3h1.65v1.4h-1.65zM1811 535.3h1.65v1.4h-1.65zM1813 535.3h1.65v1.4h-1.65zM1815 535.3h3.65v1.4h-3.65zM1819 535.3h1.65v1.4h-1.65zM1822 535.3h2.65v1.4h-2.65zM1825 535.3h1.65v1.4h-1.65zM1827 535.3h0.65v1.4h-0.65zM1828 535.3h0.65v1.4h-0.65zM1830 535.3h1.65v1.4h-1.65zM1832 535.3h3.65v1.4h-3.65zM1836 535.3h1.65v1.4h-1.65zM1838 535.3h1.65v1.4h-1.65zM1798 545.3h2.65v1.4h-2.65zM1801 545.3h2.65v1.4h-2.65zM1804 545.3h3.65v1.4h-3.65zM1808 545.3h0.65v1.4h-0.65zM1809 545.3h0.65v1.4h-0.65zM1798 555.3h2.65v1.4h-2.65zM1801 555.3h1.65v1.4h-1.65zM1803 555.3h0.65v1.4h-0.65zM1804 555.3h3.65v1.4h-3.65zM1808 555.3h0.65v1.4h-0.65zM1810 555.3h3.65v1.4h-3.65zM1814 555.3h3.65v1.4h-3.65zM1818 555.3h1.65v1.4h-1.65zM1821 555.3h2.65v1.4h-2.65zM1824 555.3h2.65v1.4h-2.65zM1827 555.3h2.65v1.4h-2.65zM1830 555.3h0.65v1.4h-0.65zM1832 555.3h2.65v1.4h-2.65zM1835 555.3h1.65v1.4h-1.65zM1837 555.3h2.65v1.4h-2.65zM1840 555.3h1.65v1.4h-1.65zM1798 573.3h1.65v1.4h-1.65zM1800 573.3h2.65v1.4h-2.65zM1803 573.3h2.65v1.4h-2.65zM1806 573.3h2.65v1.4h-2.65zM1810 573.3h1.65v1.4h-1.65zM1812 573.3h1.65v1.4h-1.65zM1814 573.3h3.65v1.4h-3.65zM1819 573.3h3.65v1.4h-3.65zM1823 573.3h2.65v1.4h-2.65zM1826 573.3h1.65v1.4h-1.65zM1798 591.3h0.65v1.4h-0.65zM1799 591.3h1.65v1.4h-1.65zM1801 591.3h2.65v1.4h-2.65zM1805 591.3h1.65v1.4h-1.65zM1807 591.3h1.65v1.4h-1.65zM1809 591.3h2.65v1.4h-2.65zM1812 591.3h3.65v1.4h-3.65zM1817 591.3h1.65v1.4h-1.65zM1819 591.3h1.65v1.4h-1.65zM1821 591.3h2.65v1.4h-2.65zM1825 591.3h2.65v1.4h-2.65zM1828 591.3h2.65v1.4h-2.65zM1831 591.3h0.65v1.4h-0.65zM1832 591.3h1.65v1.4h-1.65zM1798 599.3h3.65v1.4h-3.65zM1802 599.3h1.65v1.4h-1.65zM1804 599.3h2.65v1.4h-2.65zM1807 599.3h1.65v1.4h-1.65zM1810 599.3h1.65v1.4h-1.65zM1812 599.3h1.65v1.4h-1.65zM1814 599.3h1.65v1.4h-1.65zM1816 599.3h3.65v1.4h-3.65zM1820 599.3h0.65v1.4h-0.65zM1798 609.3h1.65v1.4h-1.65zM1800 609.3h1.65v1.4h-1.65zM1802 609.3h1.65v1.4h-1.65zM1804 609.3h0.65v1.4h-0.65zM1806 609.3h1.65v1.4h-1.65zM1808 609.3h1.65v1.4h-1.65zM1810 609.3h3.65v1.4h-3.65zM1814 609.3h2.65v1.4h-2.65zM1818 609.3h0.65v1.4h-0.65zM1819 609.3h1.65v1.4h-1.65zM1821 609.3h1.65v1.4h-1.65zM1823 609.3h0.65v1.4h-0.65zM1824 609.3h2.65v1.4h-2.65zM1827 609.3h2.65v1.4h-2.65zM1831 609.3h2.65v1.4h-2.65zM1834 609.3h2.65v1.4h-2.65zM1837 609.3h0.65v1.4h-0.65zM1839 609.3h2.65v1.4h-2.65zM1842 609.3h0.65v1.4h-0.65zM1843 609.3h1.65v1.4h-1.65zM1845 609.3h0.65v1.4h-0.65zM1798 625.3h2.65v1.4h-2.65zM1801 625.3h2.65v1.4h-2.65zM1804 625.3h2.65v1.4h-2.65zM1807 625.3h0.65v1.4h-0.65zM1809 625.3h3.65v1.4h-3.65zM1813 625.3h1.65v1.4h-1.65zM1816 625.3h0.65v1.4h-0.65zM1817 625.3h0.65v1.4h-0.65zM1818 625.3h0.65v1.4h-0.65zM1819 625.3h1.65v1.4h-1.65zM1821 625.3h0.65v1.4h-0.65zM1798 635.3h2.65v1.4h-2.65zM1801 635.3h2.65v1.4h-2.65zM1804 635.3h0.65v1.4h-0.65zM1805 635.3h3.65v1.4h-3.65zM1809 635.3h0.65v1.4h-0.65zM1811 635.3h1.65v1.4h-1.65zM1813 635.3h2.65v1.4h-2.65zM1816 635.3h1.65v1.4h-1.65zM1819 635.3h1.65v1.4h-1.65zM1821 635.3h1.65v1.4h-1.65zM1823 635.3h2.65v1.4h-2.65zM1826 635.3h3.65v1.4h-3.65zM1830 635.3h0.65v1.4h-0.65zM1798 649.3h1.65v1.4h-1.65zM1800 649.3h1.65v1.4h-1.65zM1802 649.3h1.65v1.4h-1.65zM1804 649.3h0.65v1.4h-0.65zM1805 649.3h1.65v1.4h-1.65zM1808 649.3h1.65v1.4h-1.65zM1810 649.3h2.65v1.4h-2.65zM1813 649.3h0.65v1.4h-0.65zM1798 661.3h2.65v1.4h-2.65zM1801 661.3h0.65v1.4h-0.65zM1802 661.3h1.65v1.4h-1.65zM1804 661.3h2.65v1.4h-2.65zM1807 661.3h1.65v1.4h-1.65zM1809 661.3h0.65v1.4h-0.65zM1811 661.3h1.65v1.4h-1.65zM1813 661.3h2.65v1.4h-2.65zM1816 661.3h0.65v1.4h-0.65zM1818 661.3h2.65v1.4h-2.65zM1821 661.3h1.65v1.4h-1.65zM1823 661.3h2.65v1.4h-2.65zM1826 661.3h0.65v1.4h-0.65zM1798 669.3h1.65v1.4h-1.65zM1800 669.3h2.65v1.4h-2.65zM1803 669.3h0.65v1.4h-0.65zM1805 669.3h2.65v1.4h-2.65zM1808 669.3h2.65v1.4h-2.65zM1811 669.3h2.65v1.4h-2.65zM1814 669.3h0.65v1.4h-0.65zM1798 679.3h3.65v1.4h-3.65zM1802 679.3h1.65v1.4h-1.65zM1804 679.3h1.65v1.4h-1.65zM1806 679.3h0.65v1.4h-0.65zM1807 679.3h0.65v1.4h-0.65zM1809 679.3h0.65v1.4h-0.65zM1810 679.3h1.65v1.4h-1.65zM1812 679.3h3.65v1.4h-3.65zM1816 679.3h1.65v1.4h-1.65zM1818 679.3h1.65v1.4h-1.65zM1820 679.3h0.65v1.4h-0.65zM1822 679.3h3.65v1.4h-3.65zM1826 679.3h0.65v1.4h-0.65zM1827 679.3h0.65v1.4h-0.65zM1828 679.3h0.65v1.4h-0.65zM1798 691.3h1.65v1.4h-1.65zM1800 691.3h2.65v1.4h-2.65zM1803 691.3h0.65v1.4h-0.65zM1798 707.3h1.65v1.4h-1.65zM1800 707.3h3.65v1.4h-3.65zM1804 707.3h1.65v1.4h-1.65zM1806 707.3h0.65v1.4h-0.65zM1807 707.3h1.65v1.4h-1.65zM1810 707.3h0.65v1.4h-0.65zM1811 707.3h2.65v1.4h-2.65zM1814 707.3h2.65v1.4h-2.65zM1818 707.3h0.65v1.4h-0.65zM1819 707.3h2.65v1.4h-2.65zM1822 707.3h2.65v1.4h-2.65zM1798 719.3h1.65v1.4h-1.65zM1800 719.3h2.65v1.4h-2.65zM1803 719.3h3.65v1.4h-3.65zM1807 719.3h1.65v1.4h-1.65zM1809 719.3h0.65v1.4h-0.65zM1811 719.3h0.65v1.4h-0.65zM1812 719.3h0.65v1.4h-0.65zM1813 719.3h0.65v1.4h-0.65zM1814 719.3h1.65v1.4h-1.65zM1816 719.3h1.65v1.4h-1.65zM1818 719.3h1.65v1.4h-1.65zM1820 719.3h0.65v1.4h-0.65zM1822 719.3h1.65v1.4h-1.65zM1824 719.3h1.65v1.4h-1.65zM1826 719.3h3.65v1.4h-3.65zM1830 719.3h1.65v1.4h-1.65zM1832 719.3h0.65v1.4h-0.65zM1834 719.3h2.65v1.4h-2.65zM1837 719.3h2.65v1.4h-2.65zM1840 719.3h1.65v1.4h-1.65zM1798 741.3h1.65v1.4h-1.65zM1800 741.3h0.65v1.4h-0.65zM1801 741.3h0.65v1.4h-0.65zM1802 741.3h1.65v1.4h-1.65zM1804 741.3h1.65v1.4h-1.65zM1807 741.3h1.65v1.4h-1.65zM1809 741.3h3.65v1.4h-3.65zM1813 741.3h0.65v1.4h-0.65zM1815 741.3h3.65v1.4h-3.65zM1819 741.3h1.65v1.4h-1.65zM1798 753.3h3.65v1.4h-3.65zM1802 753.3h1.65v1.4h-1.65zM1798 765.3h1.65v1.4h-1.65zM1800 765.3h3.65v1.4h-3.65zM1805 765.3h3.65v1.4h-3.65zM1809 765.3h1.65v1.4h-1.65zM1811 765.3h1.65v1.4h-1.65zM1813 765.3h1.65v1.4h-1.65zM1816 765.3h1.65v1.4h-1.65zM1818 765.3h2.65v1.4h-2.65zM1821 765.3h1.65v1.4h-1.65zM1823 765.3h2.65v1.4h-2.65zM1798 773.3h2.65v1.4h-2.65zM1801 773.3h2.65v1.4h-2.65zM1805 773.3h1.65v1.4h-1.65zM1807 773.3h1.65v1.4h-1.65zM1809 773.3h3.65v1.4h-3.65zM1813 773.3h1.65v1.4h-1.65zM1815 773.3h1.65v1.4h-1.65zM1798 789.3h1.65v1.4h-1.65zM1800 789.3h2.65v1.4h-2.65zM1803 789.3h0.65v1.4h-0.65zM1805 789.3h1.65v1.4h-1.65zM1807 789.3h1.65v1.4h-1.65zM1809 789.3h1.65v1.4h-1.65zM1812 789.3h2.65v1.4h-2.65zM1815 789.3h1.65v1.4h-1.65zM1817 789.3h0.65v1.4h-0.65zM1798 799.3h2.65v1.4h-2.65zM1801 799.3h0.65v1.4h-0.65zM1802 799.3h2.65v1.4h-2.65zM1805 799.3h1.65v1.4h-1.65zM1807 799.3h1.65v1.4h-1.65zM1798 817.3h2.65v1.4h-2.65zM1801 817.3h1.65v1.4h-1.65zM1803 817.3h2.65v1.4h-2.65zM1807 817.3h0.65v1.4h-0.65zM1808 817.3h0.65v1.4h-0.65zM1809 817.3h2.65v1.4h-2.65zM1812 817.3h1.65v1.4h-1.65zM1814 817.3h1.65v1.4h-1.65zM1816 817.3h1.65v1.4h-1.65zM1818 817.3h0.65v1.4h-0.65zM1820 817.3h3.65v1.4h-3.65zM1824 817.3h1.65v1.4h-1.65zM1827 817.3h2.65v1.4h-2.65zM1830 817.3h3.65v1.4h-3.65zM1834 817.3h1.65v1.4h-1.65zM1836 817.3h1.65v1.4h-1.65zM1838 817.3h0.65v1.4h-0.65zM1840 817.3h3.65v1.4h-3.65zM1844 817.3h2.65v1.4h-2.65zM1847 817.3h0.65v1.4h-0.65zM1798 825.3h1.65v1.4h-1.65zM1800 825.3h1.65v1.4h-1.65zM1802 825.3h1.65v1.4h-1.65zM1804 825.3h0.65v1.4h-0.65zM1805 825.3h1.65v1.4h-1.65zM1807 825.3h1.65v1.4h-1.65zM1809 825.3h0.65v1.4h-0.65zM1811 825.3h1.65v1.4h-1.65zM1813 825.3h1.65v1.4h-1.65zM1815 825.3h1.65v1.4h-1.65zM1818 825.3h0.65v1.4h-0.65zM1819 825.3h0.65v1.4h-0.65zM1820 825.3h2.65v1.4h-2.65zM1823 825.3h2.65v1.4h-2.65zM1826 825.3h0.65v1.4h-0.65zM1827 825.3h0.65v1.4h-0.65zM1798 835.3h1.65v1.4h-1.65zM1800 835.3h1.65v1.4h-1.65zM1802 835.3h0.65v1.4h-0.65zM1803 835.3h3.65v1.4h-3.65zM1807 835.3h0.65v1.4h-0.65zM1809 835.3h1.65v1.4h-1.65zM1811 835.3h1.65v1.4h-1.65zM1813 835.3h1.65v1.4h-1.65zM1815 835.3h2.65v1.4h-2.65zM1818 835.3h0.65v1.4h-0.65zM1820 835.3h1.65v1.4h-1.65zM1822 835.3h3.65v1.4h-3.65zM1826 835.3h0.65v1.4h-0.65zM1798 843.3h1.65v1.4h-1.65zM1800 843.3h2.65v1.4h-2.65zM1803 843.3h3.65v1.4h-3.65zM1807 843.3h1.65v1.4h-1.65zM1810 843.3h2.65v1.4h-2.65zM1813 843.3h2.65v1.4h-2.65zM1816 843.3h0.65v1.4h-0.65zM1798 859.3h2.65v1.4h-2.65zM1801 859.3h2.65v1.4h-2.65zM1805 859.3h2.65v1.4h-2.65zM1808 859.3h0.65v1.4h-0.65zM1809 859.3h1.65v1.4h-1.65zM1811 859.3h1.65v1.4h-1.65zM1814 859.3h0.65v1.4h-0.65zM1815 859.3h1.65v1.4h-1.65zM1817 859.3h1.65v1.4h-1.65zM1819 859.3h3.65v1.4h-3.65zM1824 859.3h1.65v1.4h-1.65zM1826 859.3h0.65v1.4h-0.65zM1827 859.3h0.65v1.4h-0.65zM1828 859.3h1.65v1.4h-1.65zM1831 859.3h1.65v1.4h-1.65zM1833 859.3h1.65v1.4h-1.65zM1835 859.3h0.65v1.4h-0.65zM1836 859.3h1.65v1.4h-1.65zM1838 859.3h0.65v1.4h-0.65zM1839 859.3h3.65v1.4h-3.65z"/><path fill="#9cdcfe" opacity="0.55" d="M1802 159.3h2.65v1.4h-2.65zM1805 159.3h2.65v1.4h-2.65zM1808 159.3h2.65v1.4h-2.65zM1811 159.3h1.65v1.4h-1.65zM1802 161.3h2.65v1.4h-2.65zM1805 161.3h3.65v1.4h-3.65zM1802 163.3h2.65v1.4h-2.65zM1805 163.3h2.65v1.4h-2.65zM1815 171.3h0.65v1.4h-0.65zM1816 171.3h0.65v1.4h-0.65zM1817 171.3h2.65v1.4h-2.65zM1820 171.3h0.65v1.4h-0.65zM1821 171.3h1.65v1.4h-1.65zM1834 171.3h1.65v1.4h-1.65zM1836 171.3h1.65v1.4h-1.65zM1838 171.3h0.65v1.4h-0.65zM1839 171.3h1.65v1.4h-1.65zM1813 173.3h2.65v1.4h-2.65zM1816 173.3h0.65v1.4h-0.65zM1817 173.3h1.65v1.4h-1.65zM1819 173.3h1.65v1.4h-1.65zM1833 173.3h3.65v1.4h-3.65zM1837 173.3h0.65v1.4h-0.65zM1847 173.3h3.65v1.4h-3.65zM1851 173.3h1.65v1.4h-1.65zM1853 173.3h0.65v1.4h-0.65zM1859 173.3h2.65v1.4h-2.65zM1862 173.3h1.65v1.4h-1.65zM1869 173.3h2.65v1.4h-2.65zM1872 173.3h1.65v1.4h-1.65zM1874 173.3h0.65v1.4h-0.65zM1875 173.3h0.65v1.4h-0.65zM1884 173.3h2.65v1.4h-2.65zM1887 173.3h0.65v1.4h-0.65zM1888 173.3h0.65v1.4h-0.65zM1889 173.3h1.65v1.4h-1.65zM1891 173.3h1.65v1.4h-1.65zM1893 173.3h0.65v1.4h-0.65zM1814 175.3h0.65v1.4h-0.65zM1815 175.3h2.65v1.4h-2.65zM1818 175.3h0.65v1.4h-0.65zM1827 175.3h2.65v1.4h-2.65zM1830 175.3h2.65v1.4h-2.65zM1833 175.3h0.65v1.4h-0.65zM1846 175.3h1.65v1.4h-1.65zM1848 175.3h1.65v1.4h-1.65zM1850 175.3h2.65v1.4h-2.65zM1853 175.3h1.65v1.4h-1.65zM1855 175.3h3.65v1.4h-3.65zM1859 175.3h1.65v1.4h-1.65zM1868 175.3h2.65v1.4h-2.65zM1871 175.3h1.65v1.4h-1.65zM1873 175.3h1.65v1.4h-1.65zM1821 177.3h2.65v1.4h-2.65zM1824 177.3h2.65v1.4h-2.65zM1827 177.3h2.65v1.4h-2.65zM1830 177.3h0.65v1.4h-0.65zM1842 177.3h1.65v1.4h-1.65zM1844 177.3h2.65v1.4h-2.65zM1847 177.3h2.65v1.4h-2.65zM1850 177.3h3.65v1.4h-3.65zM1854 177.3h2.65v1.4h-2.65zM1865 177.3h3.65v1.4h-3.65zM1869 177.3h0.65v1.4h-0.65zM1870 177.3h0.65v1.4h-0.65zM1871 177.3h1.65v1.4h-1.65zM1873 177.3h1.65v1.4h-1.65zM1822 179.3h3.65v1.4h-3.65zM1826 179.3h3.65v1.4h-3.65zM1830 179.3h3.65v1.4h-3.65zM1834 179.3h2.65v1.4h-2.65zM1833 181.3h0.65v1.4h-0.65zM1834 181.3h0.65v1.4h-0.65zM1835 181.3h2.65v1.4h-2.65zM1838 181.3h1.65v1.4h-1.65zM1848 181.3h3.65v1.4h-3.65zM1852 181.3h3.65v1.4h-3.65zM1856 181.3h1.65v1.4h-1.65zM1858 181.3h1.65v1.4h-1.65zM1860 181.3h1.65v1.4h-1.65zM1862 181.3h0.65v1.4h-0.65zM1870 181.3h0.65v1.4h-0.65zM1871 181.3h2.65v1.4h-2.65zM1874 181.3h2.65v1.4h-2.65zM1877 181.3h0.65v1.4h-0.65zM1878 181.3h1.65v1.4h-1.65zM1802 189.3h0.65v1.4h-0.65zM1803 189.3h1.65v1.4h-1.65zM1805 189.3h1.65v1.4h-1.65zM1802 197.3h0.65v1.4h-0.65zM1803 197.3h1.65v1.4h-1.65zM1805 197.3h1.65v1.4h-1.65zM1807 197.3h1.65v1.4h-1.65zM1809 197.3h1.65v1.4h-1.65zM1802 199.3h1.65v1.4h-1.65zM1804 199.3h3.65v1.4h-3.65zM1808 199.3h2.65v1.4h-2.65zM1811 199.3h1.65v1.4h-1.65zM1802 201.3h1.65v1.4h-1.65zM1804 201.3h1.65v1.4h-1.65zM1806 201.3h3.65v1.4h-3.65zM1810 201.3h2.65v1.4h-2.65zM1802 209.3h3.65v1.4h-3.65zM1806 209.3h0.65v1.4h-0.65zM1807 209.3h1.65v1.4h-1.65zM1809 209.3h1.65v1.4h-1.65zM1802 211.3h1.65v1.4h-1.65zM1804 211.3h2.65v1.4h-2.65zM1807 211.3h2.65v1.4h-2.65zM1810 211.3h2.65v1.4h-2.65zM1802 213.3h3.65v1.4h-3.65zM1806 213.3h2.65v1.4h-2.65zM1809 213.3h2.65v1.4h-2.65zM1812 213.3h0.65v1.4h-0.65zM1802 221.3h1.65v1.4h-1.65zM1804 221.3h3.65v1.4h-3.65zM1808 221.3h2.65v1.4h-2.65zM1802 223.3h2.65v1.4h-2.65zM1805 223.3h2.65v1.4h-2.65zM1808 223.3h1.65v1.4h-1.65zM1810 223.3h0.65v1.4h-0.65zM1811 223.3h1.65v1.4h-1.65zM1802 225.3h2.65v1.4h-2.65zM1805 225.3h0.65v1.4h-0.65zM1806 225.3h3.65v1.4h-3.65zM1810 225.3h2.65v1.4h-2.65zM1802 233.3h3.65v1.4h-3.65zM1806 233.3h0.65v1.4h-0.65zM1802 241.3h1.65v1.4h-1.65zM1804 241.3h2.65v1.4h-2.65zM1807 241.3h1.65v1.4h-1.65zM1802 243.3h2.65v1.4h-2.65zM1805 243.3h1.65v1.4h-1.65zM1807 243.3h2.65v1.4h-2.65zM1810 243.3h1.65v1.4h-1.65zM1802 251.3h1.65v1.4h-1.65zM1804 251.3h2.65v1.4h-2.65zM1807 251.3h1.65v1.4h-1.65zM1809 251.3h1.65v1.4h-1.65zM1802 253.3h2.65v1.4h-2.65zM1805 253.3h0.65v1.4h-0.65zM1806 253.3h0.65v1.4h-0.65zM1807 253.3h2.65v1.4h-2.65zM1810 253.3h0.65v1.4h-0.65zM1802 261.3h2.65v1.4h-2.65zM1802 263.3h2.65v1.4h-2.65zM1805 263.3h3.65v1.4h-3.65zM1809 263.3h1.65v1.4h-1.65zM1802 271.3h1.65v1.4h-1.65zM1804 271.3h2.65v1.4h-2.65zM1807 271.3h0.65v1.4h-0.65zM1802 273.3h2.65v1.4h-2.65zM1805 273.3h2.65v1.4h-2.65zM1808 273.3h0.65v1.4h-0.65zM1802 275.3h1.65v1.4h-1.65zM1804 275.3h2.65v1.4h-2.65zM1802 277.3h2.65v1.4h-2.65zM1805 277.3h0.65v1.4h-0.65zM1806 277.3h2.65v1.4h-2.65zM1802 279.3h2.65v1.4h-2.65zM1805 279.3h2.65v1.4h-2.65zM1802 281.3h0.65v1.4h-0.65zM1803 281.3h2.65v1.4h-2.65zM1806 281.3h2.65v1.4h-2.65zM1809 281.3h2.65v1.4h-2.65zM1812 281.3h0.65v1.4h-0.65zM1802 283.3h1.65v1.4h-1.65zM1804 283.3h1.65v1.4h-1.65zM1802 285.3h2.65v1.4h-2.65zM1805 285.3h0.65v1.4h-0.65zM1806 285.3h1.65v1.4h-1.65zM1808 285.3h1.65v1.4h-1.65zM1810 285.3h0.65v1.4h-0.65zM1802 293.3h2.65v1.4h-2.65zM1805 293.3h1.65v1.4h-1.65zM1802 295.3h2.65v1.4h-2.65zM1802 303.3h3.65v1.4h-3.65zM1806 303.3h0.65v1.4h-0.65zM1802 305.3h0.65v1.4h-0.65zM1803 305.3h1.65v1.4h-1.65zM1805 305.3h0.65v1.4h-0.65zM1802 307.3h1.65v1.4h-1.65zM1804 307.3h2.65v1.4h-2.65zM1807 307.3h0.65v1.4h-0.65zM1808 307.3h0.65v1.4h-0.65zM1802 309.3h2.65v1.4h-2.65zM1805 309.3h3.65v1.4h-3.65zM1802 317.3h2.65v1.4h-2.65zM1805 317.3h2.65v1.4h-2.65zM1808 317.3h2.65v1.4h-2.65zM1802 319.3h1.65v1.4h-1.65zM1804 319.3h3.65v1.4h-3.65zM1808 319.3h0.65v1.4h-0.65zM1802 321.3h0.65v1.4h-0.65zM1803 321.3h0.65v1.4h-0.65zM1804 321.3h1.65v1.4h-1.65zM1806 321.3h0.65v1.4h-0.65zM1802 323.3h1.65v1.4h-1.65zM1804 323.3h2.65v1.4h-2.65zM1807 323.3h1.65v1.4h-1.65zM1802 325.3h1.65v1.4h-1.65zM1804 325.3h1.65v1.4h-1.65zM1806 325.3h0.65v1.4h-0.65zM1802 333.3h1.65v1.4h-1.65zM1804 333.3h2.65v1.4h-2.65zM1807 333.3h1.65v1.4h-1.65zM1802 341.3h1.65v1.4h-1.65zM1804 341.3h0.65v1.4h-0.65zM1805 341.3h1.65v1.4h-1.65zM1807 341.3h1.65v1.4h-1.65zM1809 341.3h1.65v1.4h-1.65zM1802 343.3h0.65v1.4h-0.65zM1803 343.3h1.65v1.4h-1.65zM1805 343.3h1.65v1.4h-1.65zM1807 343.3h0.65v1.4h-0.65zM1802 345.3h2.65v1.4h-2.65zM1805 345.3h1.65v1.4h-1.65zM1807 345.3h2.65v1.4h-2.65zM1810 345.3h0.65v1.4h-0.65zM1811 345.3h1.65v1.4h-1.65zM1802 353.3h1.65v1.4h-1.65zM1804 353.3h1.65v1.4h-1.65zM1806 353.3h1.65v1.4h-1.65zM1808 353.3h2.65v1.4h-2.65zM1811 353.3h1.65v1.4h-1.65zM1802 355.3h3.65v1.4h-3.65zM1806 355.3h2.65v1.4h-2.65zM1809 355.3h2.65v1.4h-2.65zM1802 357.3h0.65v1.4h-0.65zM1803 357.3h2.65v1.4h-2.65zM1806 357.3h1.65v1.4h-1.65zM1808 357.3h2.65v1.4h-2.65zM1811 357.3h1.65v1.4h-1.65zM1802 359.3h2.65v1.4h-2.65zM1805 359.3h0.65v1.4h-0.65zM1806 359.3h2.65v1.4h-2.65zM1809 359.3h1.65v1.4h-1.65zM1802 367.3h1.65v1.4h-1.65zM1804 367.3h0.65v1.4h-0.65zM1805 367.3h0.65v1.4h-0.65zM1806 367.3h0.65v1.4h-0.65zM1802 369.3h2.65v1.4h-2.65zM1802 371.3h3.65v1.4h-3.65zM1806 371.3h2.65v1.4h-2.65zM1809 371.3h0.65v1.4h-0.65zM1810 371.3h0.65v1.4h-0.65zM1802 373.3h2.65v1.4h-2.65zM1805 373.3h1.65v1.4h-1.65zM1807 373.3h1.65v1.4h-1.65zM1809 373.3h0.65v1.4h-0.65zM1810 373.3h2.65v1.4h-2.65zM1802 375.3h1.65v1.4h-1.65zM1804 375.3h1.65v1.4h-1.65zM1806 375.3h2.65v1.4h-2.65zM1809 375.3h3.65v1.4h-3.65zM1813 375.3h0.65v1.4h-0.65zM1814 375.3h0.65v1.4h-0.65zM1802 377.3h1.65v1.4h-1.65zM1804 377.3h0.65v1.4h-0.65zM1805 377.3h0.65v1.4h-0.65zM1802 379.3h1.65v1.4h-1.65zM1804 379.3h3.65v1.4h-3.65zM1808 379.3h2.65v1.4h-2.65zM1811 379.3h0.65v1.4h-0.65zM1802 381.3h3.65v1.4h-3.65zM1806 381.3h2.65v1.4h-2.65zM1802 387.3h2.65v1.4h-2.65zM1805 387.3h1.65v1.4h-1.65zM1807 387.3h3.65v1.4h-3.65zM1811 387.3h1.65v1.4h-1.65zM1802 389.3h2.65v1.4h-2.65zM1805 389.3h2.65v1.4h-2.65zM1802 391.3h3.65v1.4h-3.65zM1806 391.3h0.65v1.4h-0.65zM1807 391.3h0.65v1.4h-0.65zM1802 393.3h0.65v1.4h-0.65zM1803 393.3h1.65v1.4h-1.65zM1805 393.3h1.65v1.4h-1.65zM1802 395.3h2.65v1.4h-2.65zM1805 395.3h0.65v1.4h-0.65zM1802 405.3h1.65v1.4h-1.65zM1804 405.3h3.65v1.4h-3.65zM1808 405.3h2.65v1.4h-2.65zM1811 405.3h1.65v1.4h-1.65zM1813 405.3h1.65v1.4h-1.65zM1802 407.3h1.65v1.4h-1.65zM1804 407.3h2.65v1.4h-2.65zM1807 407.3h0.65v1.4h-0.65zM1808 407.3h2.65v1.4h-2.65zM1802 415.3h3.65v1.4h-3.65zM1806 415.3h1.65v1.4h-1.65zM1808 415.3h0.65v1.4h-0.65zM1802 417.3h1.65v1.4h-1.65zM1804 417.3h1.65v1.4h-1.65zM1806 417.3h2.65v1.4h-2.65zM1802 419.3h2.65v1.4h-2.65zM1805 419.3h1.65v1.4h-1.65zM1802 421.3h2.65v1.4h-2.65zM1805 421.3h2.65v1.4h-2.65zM1808 421.3h0.65v1.4h-0.65zM1802 423.3h2.65v1.4h-2.65zM1805 423.3h0.65v1.4h-0.65zM1802 431.3h1.65v1.4h-1.65zM1804 431.3h2.65v1.4h-2.65zM1807 431.3h2.65v1.4h-2.65zM1810 431.3h1.65v1.4h-1.65zM1802 433.3h0.65v1.4h-0.65zM1803 433.3h1.65v1.4h-1.65zM1805 433.3h2.65v1.4h-2.65zM1808 433.3h0.65v1.4h-0.65zM1809 433.3h1.65v1.4h-1.65zM1802 443.3h2.65v1.4h-2.65zM1805 443.3h2.65v1.4h-2.65zM1808 443.3h2.65v1.4h-2.65zM1811 443.3h1.65v1.4h-1.65zM1802 445.3h1.65v1.4h-1.65zM1804 445.3h0.65v1.4h-0.65zM1805 445.3h2.65v1.4h-2.65zM1808 445.3h0.65v1.4h-0.65zM1809 445.3h2.65v1.4h-2.65zM1802 447.3h2.65v1.4h-2.65zM1805 447.3h1.65v1.4h-1.65zM1807 447.3h0.65v1.4h-0.65zM1802 449.3h1.65v1.4h-1.65zM1804 449.3h3.65v1.4h-3.65zM1802 451.3h1.65v1.4h-1.65zM1804 451.3h1.65v1.4h-1.65zM1806 451.3h1.65v1.4h-1.65zM1802 453.3h0.65v1.4h-0.65zM1803 453.3h2.65v1.4h-2.65zM1806 453.3h1.65v1.4h-1.65zM1808 453.3h3.65v1.4h-3.65zM1812 453.3h0.65v1.4h-0.65zM1802 459.3h2.65v1.4h-2.65zM1805 459.3h1.65v1.4h-1.65zM1807 459.3h1.65v1.4h-1.65zM1802 461.3h2.65v1.4h-2.65zM1805 461.3h2.65v1.4h-2.65zM1802 463.3h2.65v1.4h-2.65zM1805 463.3h1.65v1.4h-1.65zM1807 463.3h2.65v1.4h-2.65zM1810 463.3h0.65v1.4h-0.65zM1811 463.3h1.65v1.4h-1.65zM1813 463.3h1.65v1.4h-1.65zM1802 471.3h1.65v1.4h-1.65zM1804 471.3h1.65v1.4h-1.65zM1806 471.3h1.65v1.4h-1.65zM1808 471.3h0.65v1.4h-0.65zM1802 473.3h1.65v1.4h-1.65zM1804 473.3h1.65v1.4h-1.65zM1802 481.3h2.65v1.4h-2.65zM1805 481.3h1.65v1.4h-1.65zM1802 483.3h2.65v1.4h-2.65zM1805 483.3h0.65v1.4h-0.65zM1806 483.3h2.65v1.4h-2.65zM1802 485.3h1.65v1.4h-1.65zM1804 485.3h2.65v1.4h-2.65zM1807 485.3h0.65v1.4h-0.65zM1802 491.3h3.65v1.4h-3.65zM1806 491.3h2.65v1.4h-2.65zM1809 491.3h3.65v1.4h-3.65zM1802 493.3h0.65v1.4h-0.65zM1803 493.3h2.65v1.4h-2.65zM1806 493.3h0.65v1.4h-0.65zM1802 495.3h0.65v1.4h-0.65zM1803 495.3h2.65v1.4h-2.65zM1806 495.3h0.65v1.4h-0.65zM1802 497.3h1.65v1.4h-1.65zM1804 497.3h3.65v1.4h-3.65zM1808 497.3h2.65v1.4h-2.65zM1802 499.3h1.65v1.4h-1.65zM1804 499.3h2.65v1.4h-2.65zM1807 499.3h2.65v1.4h-2.65zM1810 499.3h0.65v1.4h-0.65zM1802 505.3h2.65v1.4h-2.65zM1805 505.3h0.65v1.4h-0.65zM1806 505.3h0.65v1.4h-0.65zM1807 505.3h1.65v1.4h-1.65zM1802 507.3h3.65v1.4h-3.65zM1806 507.3h3.65v1.4h-3.65zM1810 507.3h1.65v1.4h-1.65zM1802 509.3h0.65v1.4h-0.65zM1803 509.3h2.65v1.4h-2.65zM1806 509.3h2.65v1.4h-2.65zM1809 509.3h3.65v1.4h-3.65zM1802 511.3h0.65v1.4h-0.65zM1803 511.3h2.65v1.4h-2.65zM1806 511.3h2.65v1.4h-2.65zM1809 511.3h0.65v1.4h-0.65zM1810 511.3h0.65v1.4h-0.65zM1802 513.3h3.65v1.4h-3.65zM1806 513.3h1.65v1.4h-1.65zM1802 515.3h2.65v1.4h-2.65zM1805 515.3h2.65v1.4h-2.65zM1808 515.3h0.65v1.4h-0.65zM1802 517.3h1.65v1.4h-1.65zM1804 517.3h1.65v1.4h-1.65zM1806 517.3h3.65v1.4h-3.65zM1810 517.3h0.65v1.4h-0.65zM1802 519.3h3.65v1.4h-3.65zM1806 519.3h1.65v1.4h-1.65zM1802 527.3h0.65v1.4h-0.65zM1803 527.3h1.65v1.4h-1.65zM1805 527.3h1.65v1.4h-1.65zM1807 527.3h1.65v1.4h-1.65zM1802 529.3h1.65v1.4h-1.65zM1804 529.3h0.65v1.4h-0.65zM1805 529.3h1.65v1.4h-1.65zM1807 529.3h1.65v1.4h-1.65zM1809 529.3h2.65v1.4h-2.65zM1802 537.3h1.65v1.4h-1.65zM1804 537.3h1.65v1.4h-1.65zM1806 537.3h1.65v1.4h-1.65zM1808 537.3h2.65v1.4h-2.65zM1811 537.3h0.65v1.4h-0.65zM1802 539.3h1.65v1.4h-1.65zM1804 539.3h3.65v1.4h-3.65zM1802 547.3h2.65v1.4h-2.65zM1805 547.3h1.65v1.4h-1.65zM1802 549.3h0.65v1.4h-0.65zM1803 549.3h2.65v1.4h-2.65zM1806 549.3h2.65v1.4h-2.65zM1802 557.3h2.65v1.4h-2.65zM1805 557.3h2.65v1.4h-2.65zM1808 557.3h0.65v1.4h-0.65zM1802 559.3h2.65v1.4h-2.65zM1805 559.3h0.65v1.4h-0.65zM1806 559.3h2.65v1.4h-2.65zM1802 561.3h2.65v1.4h-2.65zM1805 561.3h2.65v1.4h-2.65zM1802 563.3h2.65v1.4h-2.65zM1805 563.3h3.65v1.4h-3.65zM1802 565.3h1.65v1.4h-1.65zM1804 565.3h0.65v1.4h-0.65zM1805 565.3h2.65v1.4h-2.65zM1808 565.3h0.65v1.4h-0.65zM1802 575.3h0.65v1.4h-0.65zM1803 575.3h0.65v1.4h-0.65zM1804 575.3h2.65v1.4h-2.65zM1807 575.3h1.65v1.4h-1.65zM1809 575.3h0.65v1.4h-0.65zM1810 575.3h2.65v1.4h-2.65zM1802 577.3h1.65v1.4h-1.65zM1804 577.3h0.65v1.4h-0.65zM1805 577.3h1.65v1.4h-1.65zM1807 577.3h1.65v1.4h-1.65zM1802 579.3h2.65v1.4h-2.65zM1805 579.3h1.65v1.4h-1.65zM1807 579.3h0.65v1.4h-0.65zM1802 581.3h2.65v1.4h-2.65zM1805 581.3h1.65v1.4h-1.65zM1807 581.3h1.65v1.4h-1.65zM1809 581.3h1.65v1.4h-1.65zM1811 581.3h0.65v1.4h-0.65zM1802 583.3h3.65v1.4h-3.65zM1806 583.3h0.65v1.4h-0.65zM1807 583.3h1.65v1.4h-1.65zM1809 583.3h1.65v1.4h-1.65zM1811 583.3h1.65v1.4h-1.65zM1802 585.3h2.65v1.4h-2.65zM1805 585.3h1.65v1.4h-1.65zM1807 585.3h1.65v1.4h-1.65zM1802 593.3h1.65v1.4h-1.65zM1804 593.3h0.65v1.4h-0.65zM1805 593.3h2.65v1.4h-2.65zM1802 601.3h2.65v1.4h-2.65zM1805 601.3h2.65v1.4h-2.65zM1808 601.3h1.65v1.4h-1.65zM1810 601.3h0.65v1.4h-0.65zM1802 603.3h3.65v1.4h-3.65zM1806 603.3h3.65v1.4h-3.65zM1810 603.3h0.65v1.4h-0.65zM1802 605.3h0.65v1.4h-0.65zM1803 605.3h0.65v1.4h-0.65zM1804 605.3h2.65v1.4h-2.65zM1807 605.3h0.65v1.4h-0.65zM1802 611.3h3.65v1.4h-3.65zM1806 611.3h1.65v1.4h-1.65zM1808 611.3h1.65v1.4h-1.65zM1810 611.3h1.65v1.4h-1.65zM1802 613.3h3.65v1.4h-3.65zM1802 615.3h1.65v1.4h-1.65zM1804 615.3h0.65v1.4h-0.65zM1805 615.3h2.65v1.4h-2.65zM1802 617.3h2.65v1.4h-2.65zM1805 617.3h0.65v1.4h-0.65zM1802 627.3h2.65v1.4h-2.65zM1805 627.3h2.65v1.4h-2.65zM1808 627.3h0.65v1.4h-0.65zM1802 629.3h1.65v1.4h-1.65zM1804 629.3h2.65v1.4h-2.65zM1807 629.3h0.65v1.4h-0.65zM1808 629.3h1.65v1.4h-1.65zM1802 637.3h2.65v1.4h-2.65zM1805 637.3h0.65v1.4h-0.65zM1806 637.3h1.65v1.4h-1.65zM1808 637.3h1.65v1.4h-1.65zM1802 639.3h0.65v1.4h-0.65zM1803 639.3h1.65v1.4h-1.65zM1805 639.3h2.65v1.4h-2.65zM1808 639.3h2.65v1.4h-2.65zM1802 641.3h2.65v1.4h-2.65zM1805 641.3h3.65v1.4h-3.65zM1809 641.3h0.65v1.4h-0.65zM1810 641.3h0.65v1.4h-0.65zM1811 641.3h0.65v1.4h-0.65zM1802 643.3h2.65v1.4h-2.65zM1805 643.3h1.65v1.4h-1.65zM1807 643.3h1.65v1.4h-1.65zM1802 651.3h1.65v1.4h-1.65zM1804 651.3h1.65v1.4h-1.65zM1806 651.3h1.65v1.4h-1.65zM1802 653.3h0.65v1.4h-0.65zM1803 653.3h1.65v1.4h-1.65zM1805 653.3h1.65v1.4h-1.65zM1802 655.3h2.65v1.4h-2.65zM1805 655.3h3.65v1.4h-3.65zM1809 655.3h0.65v1.4h-0.65zM1802 663.3h2.65v1.4h-2.65zM1805 663.3h0.65v1.4h-0.65zM1802 671.3h3.65v1.4h-3.65zM1806 671.3h1.65v1.4h-1.65zM1808 671.3h0.65v1.4h-0.65zM1802 673.3h1.65v1.4h-1.65zM1804 673.3h3.65v1.4h-3.65zM1808 673.3h1.65v1.4h-1.65zM1802 681.3h2.65v1.4h-2.65zM1805 681.3h0.65v1.4h-0.65zM1806 681.3h2.65v1.4h-2.65zM1802 683.3h0.65v1.4h-0.65zM1803 683.3h1.65v1.4h-1.65zM1805 683.3h1.65v1.4h-1.65zM1802 685.3h2.65v1.4h-2.65zM1805 685.3h2.65v1.4h-2.65zM1808 685.3h1.65v1.4h-1.65zM1810 685.3h0.65v1.4h-0.65zM1811 685.3h0.65v1.4h-0.65zM1802 693.3h1.65v1.4h-1.65zM1804 693.3h1.65v1.4h-1.65zM1806 693.3h3.65v1.4h-3.65zM1810 693.3h2.65v1.4h-2.65zM1802 695.3h1.65v1.4h-1.65zM1804 695.3h2.65v1.4h-2.65zM1807 695.3h3.65v1.4h-3.65zM1811 695.3h0.65v1.4h-0.65zM1802 697.3h1.65v1.4h-1.65zM1804 697.3h0.65v1.4h-0.65zM1805 697.3h1.65v1.4h-1.65zM1807 697.3h0.65v1.4h-0.65zM1802 699.3h3.65v1.4h-3.65zM1806 699.3h2.65v1.4h-2.65zM1802 701.3h3.65v1.4h-3.65zM1806 701.3h1.65v1.4h-1.65zM1808 701.3h3.65v1.4h-3.65zM1802 703.3h2.65v1.4h-2.65zM1805 703.3h3.65v1.4h-3.65zM1802 709.3h1.65v1.4h-1.65zM1804 709.3h2.65v1.4h-2.65zM1807 709.3h0.65v1.4h-0.65zM1802 711.3h1.65v1.4h-1.65zM1804 711.3h2.65v1.4h-2.65zM1807 711.3h1.65v1.4h-1.65zM1809 711.3h1.65v1.4h-1.65zM1802 713.3h3.65v1.4h-3.65zM1806 713.3h1.65v1.4h-1.65zM1808 713.3h2.65v1.4h-2.65zM1811 713.3h0.65v1.4h-0.65zM1802 721.3h1.65v1.4h-1.65zM1804 721.3h0.65v1.4h-0.65zM1805 721.3h2.65v1.4h-2.65zM1802 723.3h2.65v1.4h-2.65zM1802 725.3h2.65v1.4h-2.65zM1805 725.3h0.65v1.4h-0.65zM1806 725.3h1.65v1.4h-1.65zM1808 725.3h0.65v1.4h-0.65zM1802 727.3h0.65v1.4h-0.65zM1803 727.3h1.65v1.4h-1.65zM1805 727.3h1.65v1.4h-1.65zM1802 729.3h2.65v1.4h-2.65zM1805 729.3h0.65v1.4h-0.65zM1806 729.3h1.65v1.4h-1.65zM1808 729.3h0.65v1.4h-0.65zM1802 731.3h1.65v1.4h-1.65zM1804 731.3h3.65v1.4h-3.65zM1808 731.3h1.65v1.4h-1.65zM1802 733.3h2.65v1.4h-2.65zM1805 733.3h0.65v1.4h-0.65zM1802 735.3h2.65v1.4h-2.65zM1805 735.3h0.65v1.4h-0.65zM1802 743.3h1.65v1.4h-1.65zM1804 743.3h1.65v1.4h-1.65zM1806 743.3h1.65v1.4h-1.65zM1808 743.3h2.65v1.4h-2.65zM1811 743.3h1.65v1.4h-1.65zM1802 745.3h2.65v1.4h-2.65zM1805 745.3h1.65v1.4h-1.65zM1807 745.3h1.65v1.4h-1.65zM1802 747.3h1.65v1.4h-1.65zM1804 747.3h3.65v1.4h-3.65zM1808 747.3h1.65v1.4h-1.65zM1810 747.3h1.65v1.4h-1.65zM1802 755.3h0.65v1.4h-0.65zM1803 755.3h0.65v1.4h-0.65zM1804 755.3h2.65v1.4h-2.65zM1802 757.3h3.65v1.4h-3.65zM1806 757.3h2.65v1.4h-2.65zM1809 757.3h0.65v1.4h-0.65zM1810 757.3h1.65v1.4h-1.65zM1812 757.3h0.65v1.4h-0.65zM1802 759.3h2.65v1.4h-2.65zM1805 759.3h2.65v1.4h-2.65zM1808 759.3h0.65v1.4h-0.65zM1802 767.3h3.65v1.4h-3.65zM1806 767.3h3.65v1.4h-3.65zM1810 767.3h1.65v1.4h-1.65zM1812 767.3h2.65v1.4h-2.65zM1802 769.3h2.65v1.4h-2.65zM1805 769.3h0.65v1.4h-0.65zM1802 775.3h3.65v1.4h-3.65zM1806 775.3h3.65v1.4h-3.65zM1810 775.3h1.65v1.4h-1.65zM1802 777.3h3.65v1.4h-3.65zM1806 777.3h0.65v1.4h-0.65zM1807 777.3h0.65v1.4h-0.65zM1808 777.3h1.65v1.4h-1.65zM1810 777.3h1.65v1.4h-1.65zM1802 779.3h0.65v1.4h-0.65zM1803 779.3h2.65v1.4h-2.65zM1806 779.3h1.65v1.4h-1.65zM1808 779.3h0.65v1.4h-0.65zM1809 779.3h2.65v1.4h-2.65zM1802 781.3h1.65v1.4h-1.65zM1804 781.3h1.65v1.4h-1.65zM1806 781.3h2.65v1.4h-2.65zM1809 781.3h2.65v1.4h-2.65zM1802 783.3h3.65v1.4h-3.65zM1806 783.3h1.65v1.4h-1.65zM1802 785.3h2.65v1.4h-2.65zM1805 785.3h1.65v1.4h-1.65zM1807 785.3h0.65v1.4h-0.65zM1808 785.3h2.65v1.4h-2.65zM1802 791.3h0.65v1.4h-0.65zM1803 791.3h2.65v1.4h-2.65zM1806 791.3h1.65v1.4h-1.65zM1808 791.3h1.65v1.4h-1.65zM1810 791.3h1.65v1.4h-1.65zM1802 793.3h0.65v1.4h-0.65zM1803 793.3h0.65v1.4h-0.65zM1804 793.3h1.65v1.4h-1.65zM1806 793.3h3.65v1.4h-3.65zM1810 793.3h0.65v1.4h-0.65zM1811 793.3h0.65v1.4h-0.65zM1812 793.3h0.65v1.4h-0.65zM1802 801.3h2.65v1.4h-2.65zM1805 801.3h0.65v1.4h-0.65zM1806 801.3h1.65v1.4h-1.65zM1802 803.3h1.65v1.4h-1.65zM1804 803.3h1.65v1.4h-1.65zM1806 803.3h1.65v1.4h-1.65zM1808 803.3h1.65v1.4h-1.65zM1802 805.3h0.65v1.4h-0.65zM1803 805.3h1.65v1.4h-1.65zM1805 805.3h0.65v1.4h-0.65zM1806 805.3h1.65v1.4h-1.65zM1808 805.3h0.65v1.4h-0.65zM1802 807.3h2.65v1.4h-2.65zM1805 807.3h1.65v1.4h-1.65zM1802 809.3h0.65v1.4h-0.65zM1803 809.3h1.65v1.4h-1.65zM1805 809.3h0.65v1.4h-0.65zM1806 809.3h2.65v1.4h-2.65zM1809 809.3h1.65v1.4h-1.65zM1811 809.3h0.65v1.4h-0.65zM1802 811.3h2.65v1.4h-2.65zM1805 811.3h1.65v1.4h-1.65zM1802 819.3h1.65v1.4h-1.65zM1804 819.3h0.65v1.4h-0.65zM1805 819.3h2.65v1.4h-2.65zM1802 821.3h1.65v1.4h-1.65zM1804 821.3h3.65v1.4h-3.65zM1808 821.3h0.65v1.4h-0.65zM1802 827.3h1.65v1.4h-1.65zM1804 827.3h2.65v1.4h-2.65zM1802 829.3h0.65v1.4h-0.65zM1803 829.3h2.65v1.4h-2.65zM1806 829.3h1.65v1.4h-1.65zM1808 829.3h2.65v1.4h-2.65zM1802 837.3h2.65v1.4h-2.65zM1805 837.3h3.65v1.4h-3.65zM1802 845.3h0.65v1.4h-0.65zM1803 845.3h1.65v1.4h-1.65zM1802 847.3h3.65v1.4h-3.65zM1806 847.3h2.65v1.4h-2.65zM1809 847.3h2.65v1.4h-2.65zM1802 849.3h2.65v1.4h-2.65zM1805 849.3h2.65v1.4h-2.65zM1808 849.3h0.65v1.4h-0.65zM1802 851.3h2.65v1.4h-2.65zM1805 851.3h1.65v1.4h-1.65zM1807 851.3h1.65v1.4h-1.65zM1802 853.3h2.65v1.4h-2.65zM1805 853.3h1.65v1.4h-1.65zM1807 853.3h1.65v1.4h-1.65z"/><path fill="#ce9178" opacity="0.55" d="M1815 159.3h2.65v1.4h-2.65zM1818 159.3h2.65v1.4h-2.65zM1821 159.3h2.65v1.4h-2.65zM1826 159.3h1.65v1.4h-1.65zM1828 159.3h0.65v1.4h-0.65zM1829 159.3h2.65v1.4h-2.65zM1832 159.3h1.65v1.4h-1.65zM1834 159.3h1.65v1.4h-1.65zM1825 171.3h1.65v1.4h-1.65zM1827 171.3h2.65v1.4h-2.65zM1830 171.3h0.65v1.4h-0.65zM1831 171.3h0.65v1.4h-0.65zM1832 171.3h0.65v1.4h-0.65zM1843 171.3h3.65v1.4h-3.65zM1847 171.3h2.65v1.4h-2.65zM1850 171.3h2.65v1.4h-2.65zM1853 171.3h0.65v1.4h-0.65zM1854 171.3h0.65v1.4h-0.65zM1823 173.3h0.65v1.4h-0.65zM1824 173.3h0.65v1.4h-0.65zM1825 173.3h0.65v1.4h-0.65zM1826 173.3h2.65v1.4h-2.65zM1829 173.3h1.65v1.4h-1.65zM1896 173.3h0.65v1.4h-0.65zM1821 175.3h2.65v1.4h-2.65zM1824 175.3h1.65v1.4h-1.65zM1863 175.3h3.65v1.4h-3.65zM1877 175.3h2.65v1.4h-2.65zM1880 175.3h1.65v1.4h-1.65zM1859 177.3h0.65v1.4h-0.65zM1860 177.3h1.65v1.4h-1.65zM1862 177.3h0.65v1.4h-0.65zM1877 177.3h1.65v1.4h-1.65zM1879 177.3h0.65v1.4h-0.65zM1880 177.3h0.65v1.4h-0.65zM1839 179.3h1.65v1.4h-1.65zM1841 179.3h1.65v1.4h-1.65zM1842 181.3h3.65v1.4h-3.65zM1846 181.3h0.65v1.4h-0.65zM1865 181.3h2.65v1.4h-2.65zM1868 181.3h0.65v1.4h-0.65zM1882 181.3h2.65v1.4h-2.65zM1885 181.3h0.65v1.4h-0.65zM1809 233.3h1.65v1.4h-1.65zM1811 233.3h1.65v1.4h-1.65zM1814 243.3h3.65v1.4h-3.65zM1818 243.3h0.65v1.4h-0.65zM1819 243.3h2.65v1.4h-2.65zM1813 253.3h2.65v1.4h-2.65zM1816 253.3h1.65v1.4h-1.65zM1818 253.3h0.65v1.4h-0.65zM1807 261.3h2.65v1.4h-2.65zM1810 261.3h1.65v1.4h-1.65zM1812 261.3h2.65v1.4h-2.65zM1809 275.3h1.65v1.4h-1.65zM1811 275.3h2.65v1.4h-2.65zM1814 275.3h0.65v1.4h-0.65zM1811 277.3h0.65v1.4h-0.65zM1812 277.3h2.65v1.4h-2.65zM1815 277.3h0.65v1.4h-0.65zM1816 277.3h0.65v1.4h-0.65zM1810 279.3h2.65v1.4h-2.65zM1813 279.3h0.65v1.4h-0.65zM1814 279.3h3.65v1.4h-3.65zM1815 281.3h1.65v1.4h-1.65zM1817 281.3h2.65v1.4h-2.65zM1820 281.3h2.65v1.4h-2.65zM1808 283.3h2.65v1.4h-2.65zM1811 283.3h1.65v1.4h-1.65zM1813 283.3h0.65v1.4h-0.65zM1814 283.3h1.65v1.4h-1.65zM1813 285.3h0.65v1.4h-0.65zM1814 285.3h1.65v1.4h-1.65zM1816 285.3h1.65v1.4h-1.65zM1818 285.3h1.65v1.4h-1.65zM1820 285.3h0.65v1.4h-0.65zM1809 293.3h3.65v1.4h-3.65zM1813 293.3h1.65v1.4h-1.65zM1808 305.3h3.65v1.4h-3.65zM1811 307.3h2.65v1.4h-2.65zM1814 307.3h3.65v1.4h-3.65zM1818 307.3h0.65v1.4h-0.65zM1811 323.3h3.65v1.4h-3.65zM1815 323.3h2.65v1.4h-2.65zM1813 341.3h0.65v1.4h-0.65zM1814 341.3h1.65v1.4h-1.65zM1816 341.3h3.65v1.4h-3.65zM1810 343.3h1.65v1.4h-1.65zM1812 343.3h1.65v1.4h-1.65zM1814 343.3h3.65v1.4h-3.65zM1815 345.3h2.65v1.4h-2.65zM1818 345.3h0.65v1.4h-0.65zM1815 357.3h2.65v1.4h-2.65zM1818 357.3h1.65v1.4h-1.65zM1813 371.3h1.65v1.4h-1.65zM1815 371.3h0.65v1.4h-0.65zM1816 371.3h1.65v1.4h-1.65zM1818 371.3h2.65v1.4h-2.65zM1817 375.3h2.65v1.4h-2.65zM1820 375.3h2.65v1.4h-2.65zM1808 377.3h1.65v1.4h-1.65zM1810 377.3h0.65v1.4h-0.65zM1811 377.3h0.65v1.4h-0.65zM1814 379.3h1.65v1.4h-1.65zM1816 379.3h3.65v1.4h-3.65zM1811 381.3h3.65v1.4h-3.65zM1815 381.3h2.65v1.4h-2.65zM1818 381.3h0.65v1.4h-0.65zM1810 391.3h1.65v1.4h-1.65zM1812 391.3h2.65v1.4h-2.65zM1815 391.3h0.65v1.4h-0.65zM1816 391.3h1.65v1.4h-1.65zM1808 395.3h1.65v1.4h-1.65zM1810 395.3h2.65v1.4h-2.65zM1813 395.3h0.65v1.4h-0.65zM1817 405.3h3.65v1.4h-3.65zM1821 405.3h1.65v1.4h-1.65zM1823 405.3h1.65v1.4h-1.65zM1811 415.3h3.65v1.4h-3.65zM1815 415.3h1.65v1.4h-1.65zM1817 415.3h1.65v1.4h-1.65zM1809 419.3h3.65v1.4h-3.65zM1811 421.3h1.65v1.4h-1.65zM1813 421.3h1.65v1.4h-1.65zM1815 421.3h2.65v1.4h-2.65zM1808 423.3h1.65v1.4h-1.65zM1810 423.3h1.65v1.4h-1.65zM1812 423.3h0.65v1.4h-0.65zM1813 423.3h1.65v1.4h-1.65zM1813 433.3h2.65v1.4h-2.65zM1816 433.3h1.65v1.4h-1.65zM1818 433.3h0.65v1.4h-0.65zM1819 433.3h0.65v1.4h-0.65zM1810 447.3h0.65v1.4h-0.65zM1811 447.3h2.65v1.4h-2.65zM1814 447.3h1.65v1.4h-1.65zM1810 451.3h2.65v1.4h-2.65zM1813 451.3h0.65v1.4h-0.65zM1815 453.3h3.65v1.4h-3.65zM1819 453.3h1.65v1.4h-1.65zM1821 453.3h0.65v1.4h-0.65zM1810 461.3h3.65v1.4h-3.65zM1814 461.3h2.65v1.4h-2.65zM1811 471.3h3.65v1.4h-3.65zM1815 471.3h0.65v1.4h-0.65zM1808 473.3h0.65v1.4h-0.65zM1809 473.3h1.65v1.4h-1.65zM1811 473.3h1.65v1.4h-1.65zM1809 481.3h0.65v1.4h-0.65zM1810 481.3h2.65v1.4h-2.65zM1811 483.3h2.65v1.4h-2.65zM1814 483.3h2.65v1.4h-2.65zM1817 483.3h1.65v1.4h-1.65zM1810 485.3h0.65v1.4h-0.65zM1811 485.3h2.65v1.4h-2.65zM1814 485.3h1.65v1.4h-1.65zM1816 485.3h0.65v1.4h-0.65zM1817 485.3h0.65v1.4h-0.65zM1815 491.3h3.65v1.4h-3.65zM1819 491.3h0.65v1.4h-0.65zM1820 491.3h1.65v1.4h-1.65zM1809 493.3h2.65v1.4h-2.65zM1812 493.3h1.65v1.4h-1.65zM1814 493.3h1.65v1.4h-1.65zM1809 495.3h1.65v1.4h-1.65zM1811 495.3h1.65v1.4h-1.65zM1813 499.3h1.65v1.4h-1.65zM1815 499.3h1.65v1.4h-1.65zM1817 499.3h1.65v1.4h-1.65zM1814 507.3h1.65v1.4h-1.65zM1816 507.3h1.65v1.4h-1.65zM1813 517.3h0.65v1.4h-0.65zM1814 517.3h1.65v1.4h-1.65zM1816 517.3h1.65v1.4h-1.65zM1818 517.3h1.65v1.4h-1.65zM1820 517.3h0.65v1.4h-0.65zM1810 519.3h2.65v1.4h-2.65zM1813 519.3h0.65v1.4h-0.65zM1811 527.3h2.65v1.4h-2.65zM1814 527.3h3.65v1.4h-3.65zM1814 529.3h2.65v1.4h-2.65zM1817 529.3h3.65v1.4h-3.65zM1821 529.3h0.65v1.4h-0.65zM1810 539.3h1.65v1.4h-1.65zM1812 539.3h1.65v1.4h-1.65zM1809 547.3h1.65v1.4h-1.65zM1811 547.3h1.65v1.4h-1.65zM1811 549.3h1.65v1.4h-1.65zM1813 549.3h2.65v1.4h-2.65zM1816 549.3h0.65v1.4h-0.65zM1811 559.3h2.65v1.4h-2.65zM1814 559.3h1.65v1.4h-1.65zM1810 579.3h2.65v1.4h-2.65zM1813 579.3h1.65v1.4h-1.65zM1815 579.3h0.65v1.4h-0.65zM1816 579.3h0.65v1.4h-0.65zM1815 583.3h0.65v1.4h-0.65zM1816 583.3h1.65v1.4h-1.65zM1818 583.3h1.65v1.4h-1.65zM1811 585.3h1.65v1.4h-1.65zM1813 585.3h1.65v1.4h-1.65zM1813 603.3h0.65v1.4h-0.65zM1814 603.3h2.65v1.4h-2.65zM1817 603.3h2.65v1.4h-2.65zM1820 603.3h0.65v1.4h-0.65zM1810 605.3h2.65v1.4h-2.65zM1813 605.3h1.65v1.4h-1.65zM1815 605.3h1.65v1.4h-1.65zM1814 611.3h0.65v1.4h-0.65zM1815 611.3h2.65v1.4h-2.65zM1818 611.3h1.65v1.4h-1.65zM1820 611.3h1.65v1.4h-1.65zM1808 613.3h3.65v1.4h-3.65zM1812 613.3h2.65v1.4h-2.65zM1815 613.3h0.65v1.4h-0.65zM1812 637.3h1.65v1.4h-1.65zM1814 637.3h3.65v1.4h-3.65zM1818 637.3h1.65v1.4h-1.65zM1814 641.3h2.65v1.4h-2.65zM1817 641.3h1.65v1.4h-1.65zM1819 641.3h0.65v1.4h-0.65zM1811 643.3h0.65v1.4h-0.65zM1812 643.3h0.65v1.4h-0.65zM1813 643.3h3.65v1.4h-3.65zM1817 643.3h0.65v1.4h-0.65zM1811 671.3h2.65v1.4h-2.65zM1814 671.3h0.65v1.4h-0.65zM1815 693.3h2.65v1.4h-2.65zM1818 693.3h1.65v1.4h-1.65zM1814 695.3h1.65v1.4h-1.65zM1816 695.3h2.65v1.4h-2.65zM1819 695.3h2.65v1.4h-2.65zM1810 697.3h2.65v1.4h-2.65zM1813 697.3h1.65v1.4h-1.65zM1815 697.3h1.65v1.4h-1.65zM1817 697.3h0.65v1.4h-0.65zM1810 709.3h1.65v1.4h-1.65zM1812 709.3h1.65v1.4h-1.65zM1813 711.3h3.65v1.4h-3.65zM1817 711.3h1.65v1.4h-1.65zM1819 711.3h1.65v1.4h-1.65zM1810 721.3h1.65v1.4h-1.65zM1812 721.3h0.65v1.4h-0.65zM1813 721.3h3.65v1.4h-3.65zM1811 725.3h2.65v1.4h-2.65zM1814 725.3h0.65v1.4h-0.65zM1808 735.3h2.65v1.4h-2.65zM1811 735.3h1.65v1.4h-1.65zM1809 755.3h0.65v1.4h-0.65zM1810 755.3h2.65v1.4h-2.65zM1815 757.3h2.65v1.4h-2.65zM1818 757.3h0.65v1.4h-0.65zM1819 757.3h1.65v1.4h-1.65zM1811 759.3h2.65v1.4h-2.65zM1814 759.3h1.65v1.4h-1.65zM1816 759.3h2.65v1.4h-2.65zM1817 767.3h1.65v1.4h-1.65zM1819 767.3h1.65v1.4h-1.65zM1821 767.3h1.65v1.4h-1.65zM1823 767.3h1.65v1.4h-1.65zM1808 769.3h1.65v1.4h-1.65zM1810 769.3h3.65v1.4h-3.65zM1814 769.3h0.65v1.4h-0.65zM1814 775.3h3.65v1.4h-3.65zM1818 775.3h1.65v1.4h-1.65zM1820 775.3h0.65v1.4h-0.65zM1814 777.3h3.65v1.4h-3.65zM1814 781.3h2.65v1.4h-2.65zM1817 781.3h1.65v1.4h-1.65zM1819 781.3h0.65v1.4h-0.65zM1810 783.3h2.65v1.4h-2.65zM1813 783.3h0.65v1.4h-0.65zM1815 793.3h2.65v1.4h-2.65zM1818 793.3h0.65v1.4h-0.65zM1810 801.3h2.65v1.4h-2.65zM1813 801.3h3.65v1.4h-3.65zM1817 801.3h0.65v1.4h-0.65zM1809 807.3h2.65v1.4h-2.65zM1812 807.3h2.65v1.4h-2.65zM1815 807.3h0.65v1.4h-0.65zM1810 819.3h2.65v1.4h-2.65zM1813 819.3h0.65v1.4h-0.65zM1814 819.3h0.65v1.4h-0.65zM1811 821.3h0.65v1.4h-0.65zM1812 821.3h3.65v1.4h-3.65zM1816 821.3h1.65v1.4h-1.65zM1818 821.3h0.65v1.4h-0.65zM1809 827.3h0.65v1.4h-0.65zM1810 827.3h1.65v1.4h-1.65zM1812 827.3h1.65v1.4h-1.65zM1814 827.3h0.65v1.4h-0.65zM1807 845.3h3.65v1.4h-3.65zM1811 845.3h2.65v1.4h-2.65zM1811 849.3h0.65v1.4h-0.65zM1812 849.3h2.65v1.4h-2.65zM1815 849.3h3.65v1.4h-3.65z"/><path fill="#b5cea8" opacity="0.55" d="M1811 161.3h0.65v1.4h-0.65zM1810 163.3h0.65v1.4h-0.65zM1840 173.3h2.65v1.4h-2.65zM1843 173.3h1.65v1.4h-1.65zM1856 173.3h0.65v1.4h-0.65zM1866 173.3h0.65v1.4h-0.65zM1878 173.3h2.65v1.4h-2.65zM1881 173.3h0.65v1.4h-0.65zM1836 175.3h2.65v1.4h-2.65zM1839 175.3h0.65v1.4h-0.65zM1841 175.3h3.65v1.4h-3.65zM1813 197.3h1.65v1.4h-1.65zM1815 197.3h1.65v1.4h-1.65zM1815 199.3h1.65v1.4h-1.65zM1817 199.3h1.65v1.4h-1.65zM1815 201.3h1.65v1.4h-1.65zM1817 201.3h0.65v1.4h-0.65zM1813 209.3h2.65v1.4h-2.65zM1816 209.3h0.65v1.4h-0.65zM1815 211.3h2.65v1.4h-2.65zM1818 211.3h0.65v1.4h-0.65zM1815 213.3h0.65v1.4h-0.65zM1816 213.3h1.65v1.4h-1.65zM1813 221.3h3.65v1.4h-3.65zM1815 223.3h1.65v1.4h-1.65zM1817 223.3h0.65v1.4h-0.65zM1818 223.3h0.65v1.4h-0.65zM1815 225.3h2.65v1.4h-2.65zM1811 241.3h0.65v1.4h-0.65zM1812 241.3h2.65v1.4h-2.65zM1813 251.3h0.65v1.4h-0.65zM1813 263.3h2.65v1.4h-2.65zM1816 263.3h0.65v1.4h-0.65zM1810 271.3h1.65v1.4h-1.65zM1812 271.3h1.65v1.4h-1.65zM1811 273.3h1.65v1.4h-1.65zM1813 273.3h1.65v1.4h-1.65zM1807 295.3h0.65v1.4h-0.65zM1808 295.3h2.65v1.4h-2.65zM1809 303.3h1.65v1.4h-1.65zM1811 303.3h0.65v1.4h-0.65zM1813 303.3h1.65v1.4h-1.65zM1815 303.3h1.65v1.4h-1.65zM1817 303.3h0.65v1.4h-0.65zM1811 309.3h0.65v1.4h-0.65zM1813 317.3h1.65v1.4h-1.65zM1815 317.3h0.65v1.4h-0.65zM1817 317.3h0.65v1.4h-0.65zM1818 317.3h1.65v1.4h-1.65zM1820 317.3h1.65v1.4h-1.65zM1811 319.3h0.65v1.4h-0.65zM1812 319.3h1.65v1.4h-1.65zM1814 319.3h0.65v1.4h-0.65zM1809 325.3h0.65v1.4h-0.65zM1811 333.3h2.65v1.4h-2.65zM1814 333.3h0.65v1.4h-0.65zM1814 355.3h2.65v1.4h-2.65zM1817 355.3h0.65v1.4h-0.65zM1813 359.3h1.65v1.4h-1.65zM1815 359.3h1.65v1.4h-1.65zM1807 369.3h0.65v1.4h-0.65zM1815 373.3h3.65v1.4h-3.65zM1815 387.3h0.65v1.4h-0.65zM1810 389.3h3.65v1.4h-3.65zM1809 393.3h0.65v1.4h-0.65zM1810 393.3h0.65v1.4h-0.65zM1811 393.3h1.65v1.4h-1.65zM1813 407.3h0.65v1.4h-0.65zM1814 431.3h0.65v1.4h-0.65zM1815 431.3h2.65v1.4h-2.65zM1815 443.3h2.65v1.4h-2.65zM1819 443.3h2.65v1.4h-2.65zM1822 443.3h0.65v1.4h-0.65zM1823 443.3h0.65v1.4h-0.65zM1814 445.3h3.65v1.4h-3.65zM1810 449.3h2.65v1.4h-2.65zM1814 449.3h2.65v1.4h-2.65zM1817 449.3h1.65v1.4h-1.65zM1817 463.3h2.65v1.4h-2.65zM1820 463.3h0.65v1.4h-0.65zM1813 497.3h0.65v1.4h-0.65zM1811 505.3h0.65v1.4h-0.65zM1815 509.3h0.65v1.4h-0.65zM1816 509.3h1.65v1.4h-1.65zM1818 509.3h0.65v1.4h-0.65zM1813 511.3h0.65v1.4h-0.65zM1810 513.3h2.65v1.4h-2.65zM1814 513.3h2.65v1.4h-2.65zM1817 513.3h1.65v1.4h-1.65zM1811 515.3h2.65v1.4h-2.65zM1814 515.3h0.65v1.4h-0.65zM1814 537.3h2.65v1.4h-2.65zM1817 537.3h0.65v1.4h-0.65zM1811 557.3h2.65v1.4h-2.65zM1814 557.3h0.65v1.4h-0.65zM1811 563.3h2.65v1.4h-2.65zM1815 563.3h1.65v1.4h-1.65zM1817 563.3h1.65v1.4h-1.65zM1819 563.3h0.65v1.4h-0.65zM1811 565.3h2.65v1.4h-2.65zM1814 565.3h0.65v1.4h-0.65zM1815 575.3h2.65v1.4h-2.65zM1819 575.3h0.65v1.4h-0.65zM1820 575.3h1.65v1.4h-1.65zM1822 575.3h1.65v1.4h-1.65zM1811 577.3h2.65v1.4h-2.65zM1814 577.3h0.65v1.4h-0.65zM1810 593.3h0.65v1.4h-0.65zM1810 615.3h1.65v1.4h-1.65zM1812 615.3h1.65v1.4h-1.65zM1808 617.3h3.65v1.4h-3.65zM1811 627.3h2.65v1.4h-2.65zM1814 627.3h0.65v1.4h-0.65zM1813 639.3h1.65v1.4h-1.65zM1815 639.3h1.65v1.4h-1.65zM1810 651.3h0.65v1.4h-0.65zM1809 653.3h2.65v1.4h-2.65zM1813 653.3h0.65v1.4h-0.65zM1814 653.3h3.65v1.4h-3.65zM1812 655.3h2.65v1.4h-2.65zM1815 655.3h0.65v1.4h-0.65zM1808 663.3h2.65v1.4h-2.65zM1811 663.3h0.65v1.4h-0.65zM1812 673.3h0.65v1.4h-0.65zM1811 681.3h1.65v1.4h-1.65zM1813 681.3h1.65v1.4h-1.65zM1814 685.3h2.65v1.4h-2.65zM1818 685.3h2.65v1.4h-2.65zM1821 685.3h1.65v1.4h-1.65zM1811 699.3h0.65v1.4h-0.65zM1814 701.3h0.65v1.4h-0.65zM1811 703.3h3.65v1.4h-3.65zM1814 713.3h0.65v1.4h-0.65zM1807 723.3h0.65v1.4h-0.65zM1811 729.3h0.65v1.4h-0.65zM1812 731.3h2.65v1.4h-2.65zM1815 731.3h0.65v1.4h-0.65zM1808 733.3h2.65v1.4h-2.65zM1811 733.3h0.65v1.4h-0.65zM1815 743.3h2.65v1.4h-2.65zM1818 743.3h0.65v1.4h-0.65zM1814 747.3h0.65v1.4h-0.65zM1814 779.3h1.65v1.4h-1.65zM1816 779.3h0.65v1.4h-0.65zM1818 779.3h0.65v1.4h-0.65zM1819 779.3h1.65v1.4h-1.65zM1821 779.3h1.65v1.4h-1.65zM1813 785.3h2.65v1.4h-2.65zM1817 785.3h2.65v1.4h-2.65zM1820 785.3h0.65v1.4h-0.65zM1821 785.3h0.65v1.4h-0.65zM1814 791.3h2.65v1.4h-2.65zM1817 791.3h0.65v1.4h-0.65zM1812 803.3h0.65v1.4h-0.65zM1811 805.3h2.65v1.4h-2.65zM1815 805.3h0.65v1.4h-0.65zM1816 805.3h1.65v1.4h-1.65zM1818 805.3h1.65v1.4h-1.65zM1814 809.3h2.65v1.4h-2.65zM1817 809.3h0.65v1.4h-0.65zM1809 811.3h0.65v1.4h-0.65zM1813 829.3h1.65v1.4h-1.65zM1815 829.3h1.65v1.4h-1.65zM1811 837.3h0.65v1.4h-0.65zM1811 851.3h2.65v1.4h-2.65zM1815 851.3h0.65v1.4h-0.65zM1816 851.3h1.65v1.4h-1.65zM1818 851.3h1.65v1.4h-1.65zM1811 853.3h2.65v1.4h-2.65zM1814 853.3h0.65v1.4h-0.65z"/><path fill="#6a9955" opacity="0.55" d="M1802 165.3h1.65v1.4h-1.65zM1805 165.3h1.65v1.4h-1.65zM1807 165.3h2.65v1.4h-2.65zM1810 165.3h0.65v1.4h-0.65zM1811 165.3h2.65v1.4h-2.65zM1814 165.3h0.65v1.4h-0.65zM1815 165.3h0.65v1.4h-0.65zM1817 165.3h0.65v1.4h-0.65zM1818 165.3h1.65v1.4h-1.65zM1820 165.3h1.65v1.4h-1.65zM1822 165.3h2.65v1.4h-2.65zM1826 165.3h0.65v1.4h-0.65zM1827 165.3h0.65v1.4h-0.65zM1798 169.3h1.65v1.4h-1.65zM1801 169.3h2.65v1.4h-2.65zM1804 169.3h1.65v1.4h-1.65zM1807 169.3h2.65v1.4h-2.65zM1810 169.3h1.65v1.4h-1.65zM1812 169.3h2.65v1.4h-2.65zM1816 169.3h1.65v1.4h-1.65zM1818 169.3h0.65v1.4h-0.65zM1820 169.3h0.65v1.4h-0.65zM1821 169.3h3.65v1.4h-3.65zM1825 169.3h0.65v1.4h-0.65zM1826 169.3h2.65v1.4h-2.65zM1829 169.3h2.65v1.4h-2.65zM1833 169.3h1.65v1.4h-1.65zM1835 169.3h0.65v1.4h-0.65zM1837 169.3h1.65v1.4h-1.65zM1798 183.3h0.65v1.4h-0.65zM1799 183.3h0.65v1.4h-0.65zM1801 183.3h0.65v1.4h-0.65zM1802 183.3h0.65v1.4h-0.65zM1803 183.3h0.65v1.4h-0.65zM1805 183.3h3.65v1.4h-3.65zM1809 183.3h0.65v1.4h-0.65zM1810 183.3h1.65v1.4h-1.65zM1812 183.3h0.65v1.4h-0.65zM1814 183.3h2.65v1.4h-2.65zM1818 183.3h1.65v1.4h-1.65zM1820 183.3h2.65v1.4h-2.65zM1823 183.3h3.65v1.4h-3.65zM1827 183.3h2.65v1.4h-2.65zM1831 183.3h2.65v1.4h-2.65zM1835 183.3h1.65v1.4h-1.65zM1798 401.3h1.65v1.4h-1.65zM1801 401.3h1.65v1.4h-1.65zM1803 401.3h2.65v1.4h-2.65zM1806 401.3h1.65v1.4h-1.65zM1809 401.3h1.65v1.4h-1.65zM1811 401.3h0.65v1.4h-0.65zM1813 401.3h0.65v1.4h-0.65zM1814 401.3h2.65v1.4h-2.65zM1817 401.3h0.65v1.4h-0.65zM1819 401.3h1.65v1.4h-1.65zM1821 401.3h2.65v1.4h-2.65zM1824 401.3h1.65v1.4h-1.65zM1827 401.3h1.65v1.4h-1.65zM1798 439.3h1.65v1.4h-1.65zM1801 439.3h2.65v1.4h-2.65zM1804 439.3h1.65v1.4h-1.65zM1806 439.3h2.65v1.4h-2.65zM1810 439.3h0.65v1.4h-0.65zM1811 439.3h1.65v1.4h-1.65zM1814 439.3h0.65v1.4h-0.65zM1815 439.3h1.65v1.4h-1.65zM1817 439.3h3.65v1.4h-3.65zM1821 439.3h0.65v1.4h-0.65zM1823 439.3h1.65v1.4h-1.65zM1825 439.3h0.65v1.4h-0.65zM1826 439.3h0.65v1.4h-0.65zM1827 439.3h0.65v1.4h-0.65zM1829 439.3h3.65v1.4h-3.65zM1833 439.3h1.65v1.4h-1.65zM1835 439.3h0.65v1.4h-0.65zM1837 439.3h1.65v1.4h-1.65zM1798 523.3h1.65v1.4h-1.65zM1801 523.3h1.65v1.4h-1.65zM1803 523.3h0.65v1.4h-0.65zM1804 523.3h1.65v1.4h-1.65zM1807 523.3h3.65v1.4h-3.65zM1811 523.3h1.65v1.4h-1.65zM1813 523.3h0.65v1.4h-0.65zM1815 523.3h2.65v1.4h-2.65zM1818 523.3h0.65v1.4h-0.65zM1820 523.3h2.65v1.4h-2.65zM1823 523.3h1.65v1.4h-1.65zM1825 523.3h1.65v1.4h-1.65zM1828 523.3h1.65v1.4h-1.65zM1798 571.3h0.65v1.4h-0.65zM1799 571.3h0.65v1.4h-0.65zM1801 571.3h1.65v1.4h-1.65zM1803 571.3h2.65v1.4h-2.65zM1806 571.3h0.65v1.4h-0.65zM1808 571.3h3.65v1.4h-3.65zM1812 571.3h0.65v1.4h-0.65zM1814 571.3h1.65v1.4h-1.65zM1816 571.3h0.65v1.4h-0.65zM1817 571.3h3.65v1.4h-3.65zM1822 571.3h1.65v1.4h-1.65zM1798 623.3h1.65v1.4h-1.65zM1801 623.3h2.65v1.4h-2.65zM1804 623.3h1.65v1.4h-1.65zM1806 623.3h0.65v1.4h-0.65zM1808 623.3h2.65v1.4h-2.65zM1811 623.3h2.65v1.4h-2.65zM1814 623.3h1.65v1.4h-1.65zM1817 623.3h0.65v1.4h-0.65zM1818 623.3h1.65v1.4h-1.65zM1821 623.3h2.65v1.4h-2.65zM1824 623.3h2.65v1.4h-2.65zM1828 623.3h0.65v1.4h-0.65zM1829 623.3h2.65v1.4h-2.65zM1832 623.3h0.65v1.4h-0.65zM1834 623.3h1.65v1.4h-1.65zM1836 623.3h1.65v1.4h-1.65zM1838 623.3h1.65v1.4h-1.65zM1840 623.3h0.65v1.4h-0.65zM1842 623.3h0.65v1.4h-0.65zM1843 623.3h0.65v1.4h-0.65zM1798 717.3h1.65v1.4h-1.65zM1801 717.3h1.65v1.4h-1.65zM1803 717.3h3.65v1.4h-3.65zM1808 717.3h0.65v1.4h-0.65zM1809 717.3h2.65v1.4h-2.65zM1813 717.3h0.65v1.4h-0.65zM1814 717.3h1.65v1.4h-1.65zM1817 717.3h0.65v1.4h-0.65zM1818 717.3h1.65v1.4h-1.65zM1821 717.3h1.65v1.4h-1.65zM1823 717.3h0.65v1.4h-0.65zM1824 717.3h2.65v1.4h-2.65zM1827 717.3h1.65v1.4h-1.65zM1830 717.3h1.65v1.4h-1.65z"/><path fill="#d4d4d4" opacity="0.55" d="M1803 157.3h0.65v1.4h-0.65zM1813 159.3h0.65v1.4h-0.65zM1824 159.3h0.65v1.4h-0.65zM1836 159.3h0.65v1.4h-0.65zM1809 161.3h0.65v1.4h-0.65zM1812 161.3h0.65v1.4h-0.65zM1808 163.3h0.65v1.4h-0.65zM1811 163.3h0.65v1.4h-0.65zM1798 167.3h0.65v1.4h-0.65zM1813 171.3h0.65v1.4h-0.65zM1823 171.3h0.65v1.4h-0.65zM1833 171.3h0.65v1.4h-0.65zM1841 171.3h0.65v1.4h-0.65zM1855 171.3h0.65v1.4h-0.65zM1857 171.3h0.65v1.4h-0.65zM1811 173.3h0.65v1.4h-0.65zM1821 173.3h0.65v1.4h-0.65zM1831 173.3h0.65v1.4h-0.65zM1838 173.3h0.65v1.4h-0.65zM1845 173.3h0.65v1.4h-0.65zM1854 173.3h0.65v1.4h-0.65zM1857 173.3h0.65v1.4h-0.65zM1864 173.3h0.65v1.4h-0.65zM1867 173.3h0.65v1.4h-0.65zM1876 173.3h0.65v1.4h-0.65zM1882 173.3h0.65v1.4h-0.65zM1894 173.3h0.65v1.4h-0.65zM1813 175.3h0.65v1.4h-0.65zM1819 175.3h0.65v1.4h-0.65zM1826 175.3h0.65v1.4h-0.65zM1834 175.3h0.65v1.4h-0.65zM1845 175.3h0.65v1.4h-0.65zM1861 175.3h0.65v1.4h-0.65zM1867 175.3h0.65v1.4h-0.65zM1875 175.3h0.65v1.4h-0.65zM1882 175.3h0.65v1.4h-0.65zM1883 175.3h0.65v1.4h-0.65zM1819 177.3h0.65v1.4h-0.65zM1831 177.3h0.65v1.4h-0.65zM1833 177.3h1.65v1.4h-1.65zM1835 177.3h3.65v1.4h-3.65zM1839 177.3h0.65v1.4h-0.65zM1840 177.3h0.65v1.4h-0.65zM1857 177.3h0.65v1.4h-0.65zM1863 177.3h0.65v1.4h-0.65zM1875 177.3h0.65v1.4h-0.65zM1881 177.3h0.65v1.4h-0.65zM1820 179.3h0.65v1.4h-0.65zM1837 179.3h0.65v1.4h-0.65zM1843 179.3h0.65v1.4h-0.65zM1844 179.3h0.65v1.4h-0.65zM1832 181.3h0.65v1.4h-0.65zM1840 181.3h0.65v1.4h-0.65zM1847 181.3h0.65v1.4h-0.65zM1863 181.3h0.65v1.4h-0.65zM1869 181.3h0.65v1.4h-0.65zM1880 181.3h0.65v1.4h-0.65zM1887 181.3h0.65v1.4h-0.65zM1811 187.3h0.65v1.4h-0.65zM1807 189.3h0.65v1.4h-0.65zM1809 189.3h2.65v1.4h-2.65zM1812 189.3h0.65v1.4h-0.65zM1813 189.3h1.65v1.4h-1.65zM1815 189.3h0.65v1.4h-0.65zM1798 191.3h0.65v1.4h-0.65zM1812 195.3h0.65v1.4h-0.65zM1811 197.3h0.65v1.4h-0.65zM1817 197.3h0.65v1.4h-0.65zM1813 199.3h0.65v1.4h-0.65zM1819 199.3h0.65v1.4h-0.65zM1813 201.3h0.65v1.4h-0.65zM1818 201.3h0.65v1.4h-0.65zM1798 203.3h0.65v1.4h-0.65zM1811 207.3h0.65v1.4h-0.65zM1811 209.3h0.65v1.4h-0.65zM1817 209.3h0.65v1.4h-0.65zM1813 211.3h0.65v1.4h-0.65zM1819 211.3h0.65v1.4h-0.65zM1813 213.3h0.65v1.4h-0.65zM1818 213.3h0.65v1.4h-0.65zM1798 215.3h0.65v1.4h-0.65zM1810 219.3h0.65v1.4h-0.65zM1811 221.3h0.65v1.4h-0.65zM1817 221.3h0.65v1.4h-0.65zM1813 223.3h0.65v1.4h-0.65zM1819 223.3h0.65v1.4h-0.65zM1813 225.3h0.65v1.4h-0.65zM1818 225.3h0.65v1.4h-0.65zM1798 227.3h0.65v1.4h-0.65zM1820 231.3h0.65v1.4h-0.65zM1807 233.3h0.65v1.4h-0.65zM1813 233.3h0.65v1.4h-0.65zM1798 235.3h0.65v1.4h-0.65zM1809 239.3h0.65v1.4h-0.65zM1809 241.3h0.65v1.4h-0.65zM1815 241.3h0.65v1.4h-0.65zM1812 243.3h0.65v1.4h-0.65zM1822 243.3h0.65v1.4h-0.65zM1798 245.3h0.65v1.4h-0.65zM1836 249.3h0.65v1.4h-0.65zM1811 251.3h0.65v1.4h-0.65zM1814 251.3h0.65v1.4h-0.65zM1811 253.3h0.65v1.4h-0.65zM1819 253.3h0.65v1.4h-0.65zM1798 255.3h0.65v1.4h-0.65zM1809 259.3h0.65v1.4h-0.65zM1805 261.3h0.65v1.4h-0.65zM1815 261.3h0.65v1.4h-0.65zM1811 263.3h0.65v1.4h-0.65zM1817 263.3h0.65v1.4h-0.65zM1798 265.3h0.65v1.4h-0.65zM1816 269.3h0.65v1.4h-0.65zM1808 271.3h0.65v1.4h-0.65zM1814 271.3h0.65v1.4h-0.65zM1809 273.3h0.65v1.4h-0.65zM1815 273.3h0.65v1.4h-0.65zM1807 275.3h0.65v1.4h-0.65zM1815 275.3h0.65v1.4h-0.65zM1809 277.3h0.65v1.4h-0.65zM1817 277.3h0.65v1.4h-0.65zM1808 279.3h0.65v1.4h-0.65zM1818 279.3h0.65v1.4h-0.65zM1813 281.3h0.65v1.4h-0.65zM1823 281.3h0.65v1.4h-0.65zM1806 283.3h0.65v1.4h-0.65zM1816 283.3h0.65v1.4h-0.65zM1811 285.3h0.65v1.4h-0.65zM1821 285.3h0.65v1.4h-0.65zM1798 287.3h0.65v1.4h-0.65zM1823 291.3h0.65v1.4h-0.65zM1807 293.3h0.65v1.4h-0.65zM1815 293.3h0.65v1.4h-0.65zM1805 295.3h0.65v1.4h-0.65zM1811 295.3h0.65v1.4h-0.65zM1798 297.3h0.65v1.4h-0.65zM1843 301.3h0.65v1.4h-0.65zM1807 303.3h0.65v1.4h-0.65zM1818 303.3h0.65v1.4h-0.65zM1806 305.3h0.65v1.4h-0.65zM1812 305.3h0.65v1.4h-0.65zM1809 307.3h0.65v1.4h-0.65zM1819 307.3h0.65v1.4h-0.65zM1809 309.3h0.65v1.4h-0.65zM1812 309.3h0.65v1.4h-0.65zM1798 311.3h0.65v1.4h-0.65zM1839 315.3h0.65v1.4h-0.65zM1811 317.3h0.65v1.4h-0.65zM1822 317.3h0.65v1.4h-0.65zM1809 319.3h0.65v1.4h-0.65zM1815 319.3h0.65v1.4h-0.65zM1807 321.3h0.65v1.4h-0.65zM1809 321.3h2.65v1.4h-2.65zM1812 321.3h2.65v1.4h-2.65zM1815 321.3h0.65v1.4h-0.65zM1816 321.3h0.65v1.4h-0.65zM1809 323.3h0.65v1.4h-0.65zM1818 323.3h0.65v1.4h-0.65zM1807 325.3h0.65v1.4h-0.65zM1810 325.3h0.65v1.4h-0.65zM1798 327.3h0.65v1.4h-0.65zM1850 331.3h0.65v1.4h-0.65zM1809 333.3h0.65v1.4h-0.65zM1815 333.3h0.65v1.4h-0.65zM1798 335.3h0.65v1.4h-0.65zM1806 339.3h0.65v1.4h-0.65zM1811 341.3h0.65v1.4h-0.65zM1820 341.3h0.65v1.4h-0.65zM1808 343.3h0.65v1.4h-0.65zM1818 343.3h0.65v1.4h-0.65zM1813 345.3h0.65v1.4h-0.65zM1819 345.3h0.65v1.4h-0.65zM1798 347.3h0.65v1.4h-0.65zM1839 351.3h0.65v1.4h-0.65zM1813 353.3h0.65v1.4h-0.65zM1815 353.3h2.65v1.4h-2.65zM1818 353.3h2.65v1.4h-2.65zM1821 353.3h0.65v1.4h-0.65zM1822 353.3h0.65v1.4h-0.65zM1812 355.3h0.65v1.4h-0.65zM1818 355.3h0.65v1.4h-0.65zM1813 357.3h0.65v1.4h-0.65zM1820 357.3h0.65v1.4h-0.65zM1811 359.3h0.65v1.4h-0.65zM1817 359.3h0.65v1.4h-0.65zM1798 361.3h0.65v1.4h-0.65zM1828 365.3h0.65v1.4h-0.65zM1807 367.3h0.65v1.4h-0.65zM1809 367.3h0.65v1.4h-0.65zM1810 367.3h3.65v1.4h-3.65zM1814 367.3h1.65v1.4h-1.65zM1816 367.3h0.65v1.4h-0.65zM1805 369.3h0.65v1.4h-0.65zM1808 369.3h0.65v1.4h-0.65zM1811 371.3h0.65v1.4h-0.65zM1821 371.3h0.65v1.4h-0.65zM1813 373.3h0.65v1.4h-0.65zM1819 373.3h0.65v1.4h-0.65zM1815 375.3h0.65v1.4h-0.65zM1823 375.3h0.65v1.4h-0.65zM1806 377.3h0.65v1.4h-0.65zM1812 377.3h0.65v1.4h-0.65zM1812 379.3h0.65v1.4h-0.65zM1820 379.3h0.65v1.4h-0.65zM1809 381.3h0.65v1.4h-0.65zM1819 381.3h0.65v1.4h-0.65zM1798 383.3h0.65v1.4h-0.65zM1835 385.3h0.65v1.4h-0.65zM1813 387.3h0.65v1.4h-0.65zM1816 387.3h0.65v1.4h-0.65zM1808 389.3h0.65v1.4h-0.65zM1814 389.3h0.65v1.4h-0.65zM1808 391.3h0.65v1.4h-0.65zM1818 391.3h0.65v1.4h-0.65zM1807 393.3h0.65v1.4h-0.65zM1813 393.3h0.65v1.4h-0.65zM1806 395.3h0.65v1.4h-0.65zM1814 395.3h0.65v1.4h-0.65zM1798 397.3h0.65v1.4h-0.65zM1805 403.3h0.65v1.4h-0.65zM1815 405.3h0.65v1.4h-0.65zM1825 405.3h0.65v1.4h-0.65zM1811 407.3h0.65v1.4h-0.65zM1814 407.3h0.65v1.4h-0.65zM1798 409.3h0.65v1.4h-0.65zM1835 413.3h0.65v1.4h-0.65zM1809 415.3h0.65v1.4h-0.65zM1819 415.3h0.65v1.4h-0.65zM1809 417.3h0.65v1.4h-0.65zM1811 417.3h1.65v1.4h-1.65zM1813 417.3h1.65v1.4h-1.65zM1815 417.3h0.65v1.4h-0.65zM1816 417.3h1.65v1.4h-1.65zM1818 417.3h0.65v1.4h-0.65zM1807 419.3h0.65v1.4h-0.65zM1813 419.3h0.65v1.4h-0.65zM1809 421.3h0.65v1.4h-0.65zM1818 421.3h0.65v1.4h-0.65zM1806 423.3h0.65v1.4h-0.65zM1815 423.3h0.65v1.4h-0.65zM1798 425.3h0.65v1.4h-0.65zM1816 429.3h0.65v1.4h-0.65zM1812 431.3h0.65v1.4h-0.65zM1818 431.3h0.65v1.4h-0.65zM1811 433.3h0.65v1.4h-0.65zM1820 433.3h0.65v1.4h-0.65zM1798 435.3h0.65v1.4h-0.65zM1836 441.3h0.65v1.4h-0.65zM1813 443.3h0.65v1.4h-0.65zM1824 443.3h0.65v1.4h-0.65zM1812 445.3h0.65v1.4h-0.65zM1818 445.3h0.65v1.4h-0.65zM1808 447.3h0.65v1.4h-0.65zM1816 447.3h0.65v1.4h-0.65zM1808 449.3h0.65v1.4h-0.65zM1819 449.3h0.65v1.4h-0.65zM1808 451.3h0.65v1.4h-0.65zM1814 451.3h0.65v1.4h-0.65zM1813 453.3h0.65v1.4h-0.65zM1822 453.3h0.65v1.4h-0.65zM1798 455.3h0.65v1.4h-0.65zM1846 457.3h0.65v1.4h-0.65zM1809 459.3h0.65v1.4h-0.65zM1811 459.3h2.65v1.4h-2.65zM1814 459.3h2.65v1.4h-2.65zM1817 459.3h0.65v1.4h-0.65zM1818 459.3h0.65v1.4h-0.65zM1808 461.3h0.65v1.4h-0.65zM1817 461.3h0.65v1.4h-0.65zM1815 463.3h0.65v1.4h-0.65zM1821 463.3h0.65v1.4h-0.65zM1798 465.3h0.65v1.4h-0.65zM1829 469.3h0.65v1.4h-0.65zM1809 471.3h0.65v1.4h-0.65zM1816 471.3h0.65v1.4h-0.65zM1806 473.3h0.65v1.4h-0.65zM1813 473.3h0.65v1.4h-0.65zM1798 475.3h0.65v1.4h-0.65zM1808 479.3h0.65v1.4h-0.65zM1807 481.3h0.65v1.4h-0.65zM1813 481.3h0.65v1.4h-0.65zM1809 483.3h0.65v1.4h-0.65zM1819 483.3h0.65v1.4h-0.65zM1808 485.3h0.65v1.4h-0.65zM1818 485.3h0.65v1.4h-0.65zM1798 487.3h0.65v1.4h-0.65zM1840 489.3h0.65v1.4h-0.65zM1813 491.3h0.65v1.4h-0.65zM1822 491.3h0.65v1.4h-0.65zM1807 493.3h0.65v1.4h-0.65zM1816 493.3h0.65v1.4h-0.65zM1807 495.3h0.65v1.4h-0.65zM1813 495.3h0.65v1.4h-0.65zM1811 497.3h0.65v1.4h-0.65zM1814 497.3h0.65v1.4h-0.65zM1811 499.3h0.65v1.4h-0.65zM1819 499.3h0.65v1.4h-0.65zM1798 501.3h0.65v1.4h-0.65zM1822 503.3h0.65v1.4h-0.65zM1809 505.3h0.65v1.4h-0.65zM1812 505.3h0.65v1.4h-0.65zM1812 507.3h0.65v1.4h-0.65zM1818 507.3h0.65v1.4h-0.65zM1813 509.3h0.65v1.4h-0.65zM1819 509.3h0.65v1.4h-0.65zM1811 511.3h0.65v1.4h-0.65zM1814 511.3h0.65v1.4h-0.65zM1808 513.3h0.65v1.4h-0.65zM1819 513.3h0.65v1.4h-0.65zM1809 515.3h0.65v1.4h-0.65zM1815 515.3h0.65v1.4h-0.65zM1811 517.3h0.65v1.4h-0.65zM1821 517.3h0.65v1.4h-0.65zM1808 519.3h0.65v1.4h-0.65zM1814 519.3h0.65v1.4h-0.65zM1798 521.3h0.65v1.4h-0.65zM1841 525.3h0.65v1.4h-0.65zM1809 527.3h0.65v1.4h-0.65zM1818 527.3h0.65v1.4h-0.65zM1812 529.3h0.65v1.4h-0.65zM1822 529.3h0.65v1.4h-0.65zM1798 531.3h0.65v1.4h-0.65zM1841 535.3h0.65v1.4h-0.65zM1812 537.3h0.65v1.4h-0.65zM1818 537.3h0.65v1.4h-0.65zM1808 539.3h0.65v1.4h-0.65zM1814 539.3h0.65v1.4h-0.65zM1798 541.3h0.65v1.4h-0.65zM1811 545.3h0.65v1.4h-0.65zM1807 547.3h0.65v1.4h-0.65zM1813 547.3h0.65v1.4h-0.65zM1809 549.3h0.65v1.4h-0.65zM1817 549.3h0.65v1.4h-0.65zM1798 551.3h0.65v1.4h-0.65zM1843 555.3h0.65v1.4h-0.65zM1809 557.3h0.65v1.4h-0.65zM1815 557.3h0.65v1.4h-0.65zM1809 559.3h0.65v1.4h-0.65zM1816 559.3h0.65v1.4h-0.65zM1808 561.3h0.65v1.4h-0.65zM1810 561.3h0.65v1.4h-0.65zM1811 561.3h1.65v1.4h-1.65zM1813 561.3h0.65v1.4h-0.65zM1814 561.3h1.65v1.4h-1.65zM1816 561.3h0.65v1.4h-0.65zM1817 561.3h0.65v1.4h-0.65zM1809 563.3h0.65v1.4h-0.65zM1820 563.3h0.65v1.4h-0.65zM1809 565.3h0.65v1.4h-0.65zM1815 565.3h0.65v1.4h-0.65zM1798 567.3h0.65v1.4h-0.65zM1829 573.3h0.65v1.4h-0.65zM1813 575.3h0.65v1.4h-0.65zM1824 575.3h0.65v1.4h-0.65zM1809 577.3h0.65v1.4h-0.65zM1815 577.3h0.65v1.4h-0.65zM1808 579.3h0.65v1.4h-0.65zM1817 579.3h0.65v1.4h-0.65zM1812 581.3h0.65v1.4h-0.65zM1814 581.3h2.65v1.4h-2.65zM1817 581.3h1.65v1.4h-1.65zM1819 581.3h1.65v1.4h-1.65zM1821 581.3h0.65v1.4h-0.65zM1813 583.3h0.65v1.4h-0.65zM1820 583.3h0.65v1.4h-0.65zM1809 585.3h0.65v1.4h-0.65zM1815 585.3h0.65v1.4h-0.65zM1798 587.3h0.65v1.4h-0.65zM1835 591.3h0.65v1.4h-0.65zM1808 593.3h0.65v1.4h-0.65zM1811 593.3h0.65v1.4h-0.65zM1798 595.3h0.65v1.4h-0.65zM1822 599.3h0.65v1.4h-0.65zM1811 601.3h0.65v1.4h-0.65zM1813 601.3h3.65v1.4h-3.65zM1817 601.3h1.65v1.4h-1.65zM1819 601.3h0.65v1.4h-0.65zM1820 601.3h0.65v1.4h-0.65zM1811 603.3h0.65v1.4h-0.65zM1821 603.3h0.65v1.4h-0.65zM1808 605.3h0.65v1.4h-0.65zM1817 605.3h0.65v1.4h-0.65zM1798 607.3h0.65v1.4h-0.65zM1847 609.3h0.65v1.4h-0.65zM1812 611.3h0.65v1.4h-0.65zM1822 611.3h0.65v1.4h-0.65zM1806 613.3h0.65v1.4h-0.65zM1816 613.3h0.65v1.4h-0.65zM1808 615.3h0.65v1.4h-0.65zM1814 615.3h0.65v1.4h-0.65zM1806 617.3h0.65v1.4h-0.65zM1812 617.3h0.65v1.4h-0.65zM1798 619.3h0.65v1.4h-0.65zM1823 625.3h0.65v1.4h-0.65zM1809 627.3h0.65v1.4h-0.65zM1815 627.3h0.65v1.4h-0.65zM1810 629.3h0.65v1.4h-0.65zM1812 629.3h2.65v1.4h-2.65zM1815 629.3h3.65v1.4h-3.65zM1819 629.3h0.65v1.4h-0.65zM1798 631.3h0.65v1.4h-0.65zM1832 635.3h0.65v1.4h-0.65zM1810 637.3h0.65v1.4h-0.65zM1820 637.3h0.65v1.4h-0.65zM1811 639.3h0.65v1.4h-0.65zM1817 639.3h0.65v1.4h-0.65zM1812 641.3h0.65v1.4h-0.65zM1820 641.3h0.65v1.4h-0.65zM1809 643.3h0.65v1.4h-0.65zM1818 643.3h0.65v1.4h-0.65zM1798 645.3h0.65v1.4h-0.65zM1815 649.3h0.65v1.4h-0.65zM1808 651.3h0.65v1.4h-0.65zM1811 651.3h0.65v1.4h-0.65zM1807 653.3h0.65v1.4h-0.65zM1818 653.3h0.65v1.4h-0.65zM1810 655.3h0.65v1.4h-0.65zM1816 655.3h0.65v1.4h-0.65zM1798 657.3h0.65v1.4h-0.65zM1828 661.3h0.65v1.4h-0.65zM1806 663.3h0.65v1.4h-0.65zM1812 663.3h0.65v1.4h-0.65zM1798 665.3h0.65v1.4h-0.65zM1816 669.3h0.65v1.4h-0.65zM1809 671.3h0.65v1.4h-0.65zM1815 671.3h0.65v1.4h-0.65zM1810 673.3h0.65v1.4h-0.65zM1813 673.3h0.65v1.4h-0.65zM1798 675.3h0.65v1.4h-0.65zM1830 679.3h0.65v1.4h-0.65zM1809 681.3h0.65v1.4h-0.65zM1815 681.3h0.65v1.4h-0.65zM1807 683.3h0.65v1.4h-0.65zM1809 683.3h1.65v1.4h-1.65zM1811 683.3h2.65v1.4h-2.65zM1814 683.3h0.65v1.4h-0.65zM1815 683.3h0.65v1.4h-0.65zM1816 683.3h0.65v1.4h-0.65zM1812 685.3h0.65v1.4h-0.65zM1823 685.3h0.65v1.4h-0.65zM1798 687.3h0.65v1.4h-0.65zM1805 691.3h0.65v1.4h-0.65zM1813 693.3h0.65v1.4h-0.65zM1820 693.3h0.65v1.4h-0.65zM1812 695.3h0.65v1.4h-0.65zM1822 695.3h0.65v1.4h-0.65zM1808 697.3h0.65v1.4h-0.65zM1818 697.3h0.65v1.4h-0.65zM1809 699.3h0.65v1.4h-0.65zM1812 699.3h0.65v1.4h-0.65zM1812 701.3h0.65v1.4h-0.65zM1815 701.3h0.65v1.4h-0.65zM1809 703.3h0.65v1.4h-0.65zM1815 703.3h0.65v1.4h-0.65zM1798 705.3h0.65v1.4h-0.65zM1826 707.3h0.65v1.4h-0.65zM1808 709.3h0.65v1.4h-0.65zM1814 709.3h0.65v1.4h-0.65zM1811 711.3h0.65v1.4h-0.65zM1821 711.3h0.65v1.4h-0.65zM1812 713.3h0.65v1.4h-0.65zM1815 713.3h0.65v1.4h-0.65zM1798 715.3h0.65v1.4h-0.65zM1843 719.3h0.65v1.4h-0.65zM1808 721.3h0.65v1.4h-0.65zM1817 721.3h0.65v1.4h-0.65zM1805 723.3h0.65v1.4h-0.65zM1808 723.3h0.65v1.4h-0.65zM1809 725.3h0.65v1.4h-0.65zM1815 725.3h0.65v1.4h-0.65zM1807 727.3h0.65v1.4h-0.65zM1809 727.3h1.65v1.4h-1.65zM1811 727.3h1.65v1.4h-1.65zM1813 727.3h2.65v1.4h-2.65zM1816 727.3h0.65v1.4h-0.65zM1809 729.3h0.65v1.4h-0.65zM1812 729.3h0.65v1.4h-0.65zM1810 731.3h0.65v1.4h-0.65zM1816 731.3h0.65v1.4h-0.65zM1806 733.3h0.65v1.4h-0.65zM1812 733.3h0.65v1.4h-0.65zM1806 735.3h0.65v1.4h-0.65zM1813 735.3h0.65v1.4h-0.65zM1798 737.3h0.65v1.4h-0.65zM1822 741.3h0.65v1.4h-0.65zM1813 743.3h0.65v1.4h-0.65zM1819 743.3h0.65v1.4h-0.65zM1809 745.3h0.65v1.4h-0.65zM1811 745.3h3.65v1.4h-3.65zM1815 745.3h2.65v1.4h-2.65zM1818 745.3h0.65v1.4h-0.65zM1812 747.3h0.65v1.4h-0.65zM1815 747.3h0.65v1.4h-0.65zM1798 749.3h0.65v1.4h-0.65zM1805 753.3h0.65v1.4h-0.65zM1807 755.3h0.65v1.4h-0.65zM1813 755.3h0.65v1.4h-0.65zM1813 757.3h0.65v1.4h-0.65zM1821 757.3h0.65v1.4h-0.65zM1809 759.3h0.65v1.4h-0.65zM1819 759.3h0.65v1.4h-0.65zM1798 761.3h0.65v1.4h-0.65zM1827 765.3h0.65v1.4h-0.65zM1815 767.3h0.65v1.4h-0.65zM1825 767.3h0.65v1.4h-0.65zM1806 769.3h0.65v1.4h-0.65zM1815 769.3h0.65v1.4h-0.65zM1798 771.3h0.65v1.4h-0.65zM1818 773.3h0.65v1.4h-0.65zM1812 775.3h0.65v1.4h-0.65zM1821 775.3h0.65v1.4h-0.65zM1812 777.3h0.65v1.4h-0.65zM1818 777.3h0.65v1.4h-0.65zM1812 779.3h0.65v1.4h-0.65zM1823 779.3h0.65v1.4h-0.65zM1812 781.3h0.65v1.4h-0.65zM1820 781.3h0.65v1.4h-0.65zM1808 783.3h0.65v1.4h-0.65zM1814 783.3h0.65v1.4h-0.65zM1811 785.3h0.65v1.4h-0.65zM1822 785.3h0.65v1.4h-0.65zM1798 787.3h0.65v1.4h-0.65zM1819 789.3h0.65v1.4h-0.65zM1812 791.3h0.65v1.4h-0.65zM1818 791.3h0.65v1.4h-0.65zM1813 793.3h0.65v1.4h-0.65zM1819 793.3h0.65v1.4h-0.65zM1798 795.3h0.65v1.4h-0.65zM1810 799.3h0.65v1.4h-0.65zM1808 801.3h0.65v1.4h-0.65zM1818 801.3h0.65v1.4h-0.65zM1810 803.3h0.65v1.4h-0.65zM1813 803.3h0.65v1.4h-0.65zM1809 805.3h0.65v1.4h-0.65zM1820 805.3h0.65v1.4h-0.65zM1807 807.3h0.65v1.4h-0.65zM1816 807.3h0.65v1.4h-0.65zM1812 809.3h0.65v1.4h-0.65zM1818 809.3h0.65v1.4h-0.65zM1807 811.3h0.65v1.4h-0.65zM1810 811.3h0.65v1.4h-0.65zM1798 813.3h0.65v1.4h-0.65zM1849 817.3h0.65v1.4h-0.65zM1808 819.3h0.65v1.4h-0.65zM1815 819.3h0.65v1.4h-0.65zM1809 821.3h0.65v1.4h-0.65zM1819 821.3h0.65v1.4h-0.65zM1798 823.3h0.65v1.4h-0.65zM1829 825.3h0.65v1.4h-0.65zM1807 827.3h0.65v1.4h-0.65zM1815 827.3h0.65v1.4h-0.65zM1811 829.3h0.65v1.4h-0.65zM1817 829.3h0.65v1.4h-0.65zM1798 831.3h0.65v1.4h-0.65zM1828 835.3h0.65v1.4h-0.65zM1809 837.3h0.65v1.4h-0.65zM1812 837.3h0.65v1.4h-0.65zM1798 839.3h0.65v1.4h-0.65zM1818 843.3h0.65v1.4h-0.65zM1805 845.3h0.65v1.4h-0.65zM1814 845.3h0.65v1.4h-0.65zM1812 847.3h0.65v1.4h-0.65zM1814 847.3h2.65v1.4h-2.65zM1817 847.3h1.65v1.4h-1.65zM1819 847.3h1.65v1.4h-1.65zM1821 847.3h0.65v1.4h-0.65zM1809 849.3h0.65v1.4h-0.65zM1819 849.3h0.65v1.4h-0.65zM1809 851.3h0.65v1.4h-0.65zM1820 851.3h0.65v1.4h-0.65zM1809 853.3h0.65v1.4h-0.65zM1815 853.3h0.65v1.4h-0.65zM1798 855.3h0.65v1.4h-0.65zM1844 859.3h0.65v1.4h-0.65z"/></svg>
<div class="abs" style="left:538px;top:865px;width:1378px;height:13px;background:#1e1e1e"></div>
<svg class="abs" style="left:1340px;top:50px" width="40" height="45" viewBox="1340 50 40 45">
<path d="M1356.4 59.5 Q1356.4 57 1358.55 57 Q1360.7 57 1360.7 59.5 V66.5 Q1361 65.3 1363 65.5 Q1364.6 65.8 1364.8 67.5 Q1365.3 66.3 1367 66.5 Q1368.6 66.8 1368.7 68.3 Q1369.3 67.3 1370.6 67.4 Q1372.3 67.6 1372.3 69.8 V80 Q1372.3 87.9 1363.5 87.9 Q1358.3 87.9 1355 84 L1349.4 77.6 Q1348.3 76 1349.6 75 Q1351.2 74 1353.2 75.2 L1356.4 77 Z" fill="#fff" stroke="#111" stroke-width="1.2" stroke-linejoin="round"/>
<path d="M1360.7 66.5 V71.8 M1364.8 67.5 V72 M1368.7 68.3 V72" stroke="#111" stroke-width="1.1" fill="none"/>
</svg>
</body></html>
